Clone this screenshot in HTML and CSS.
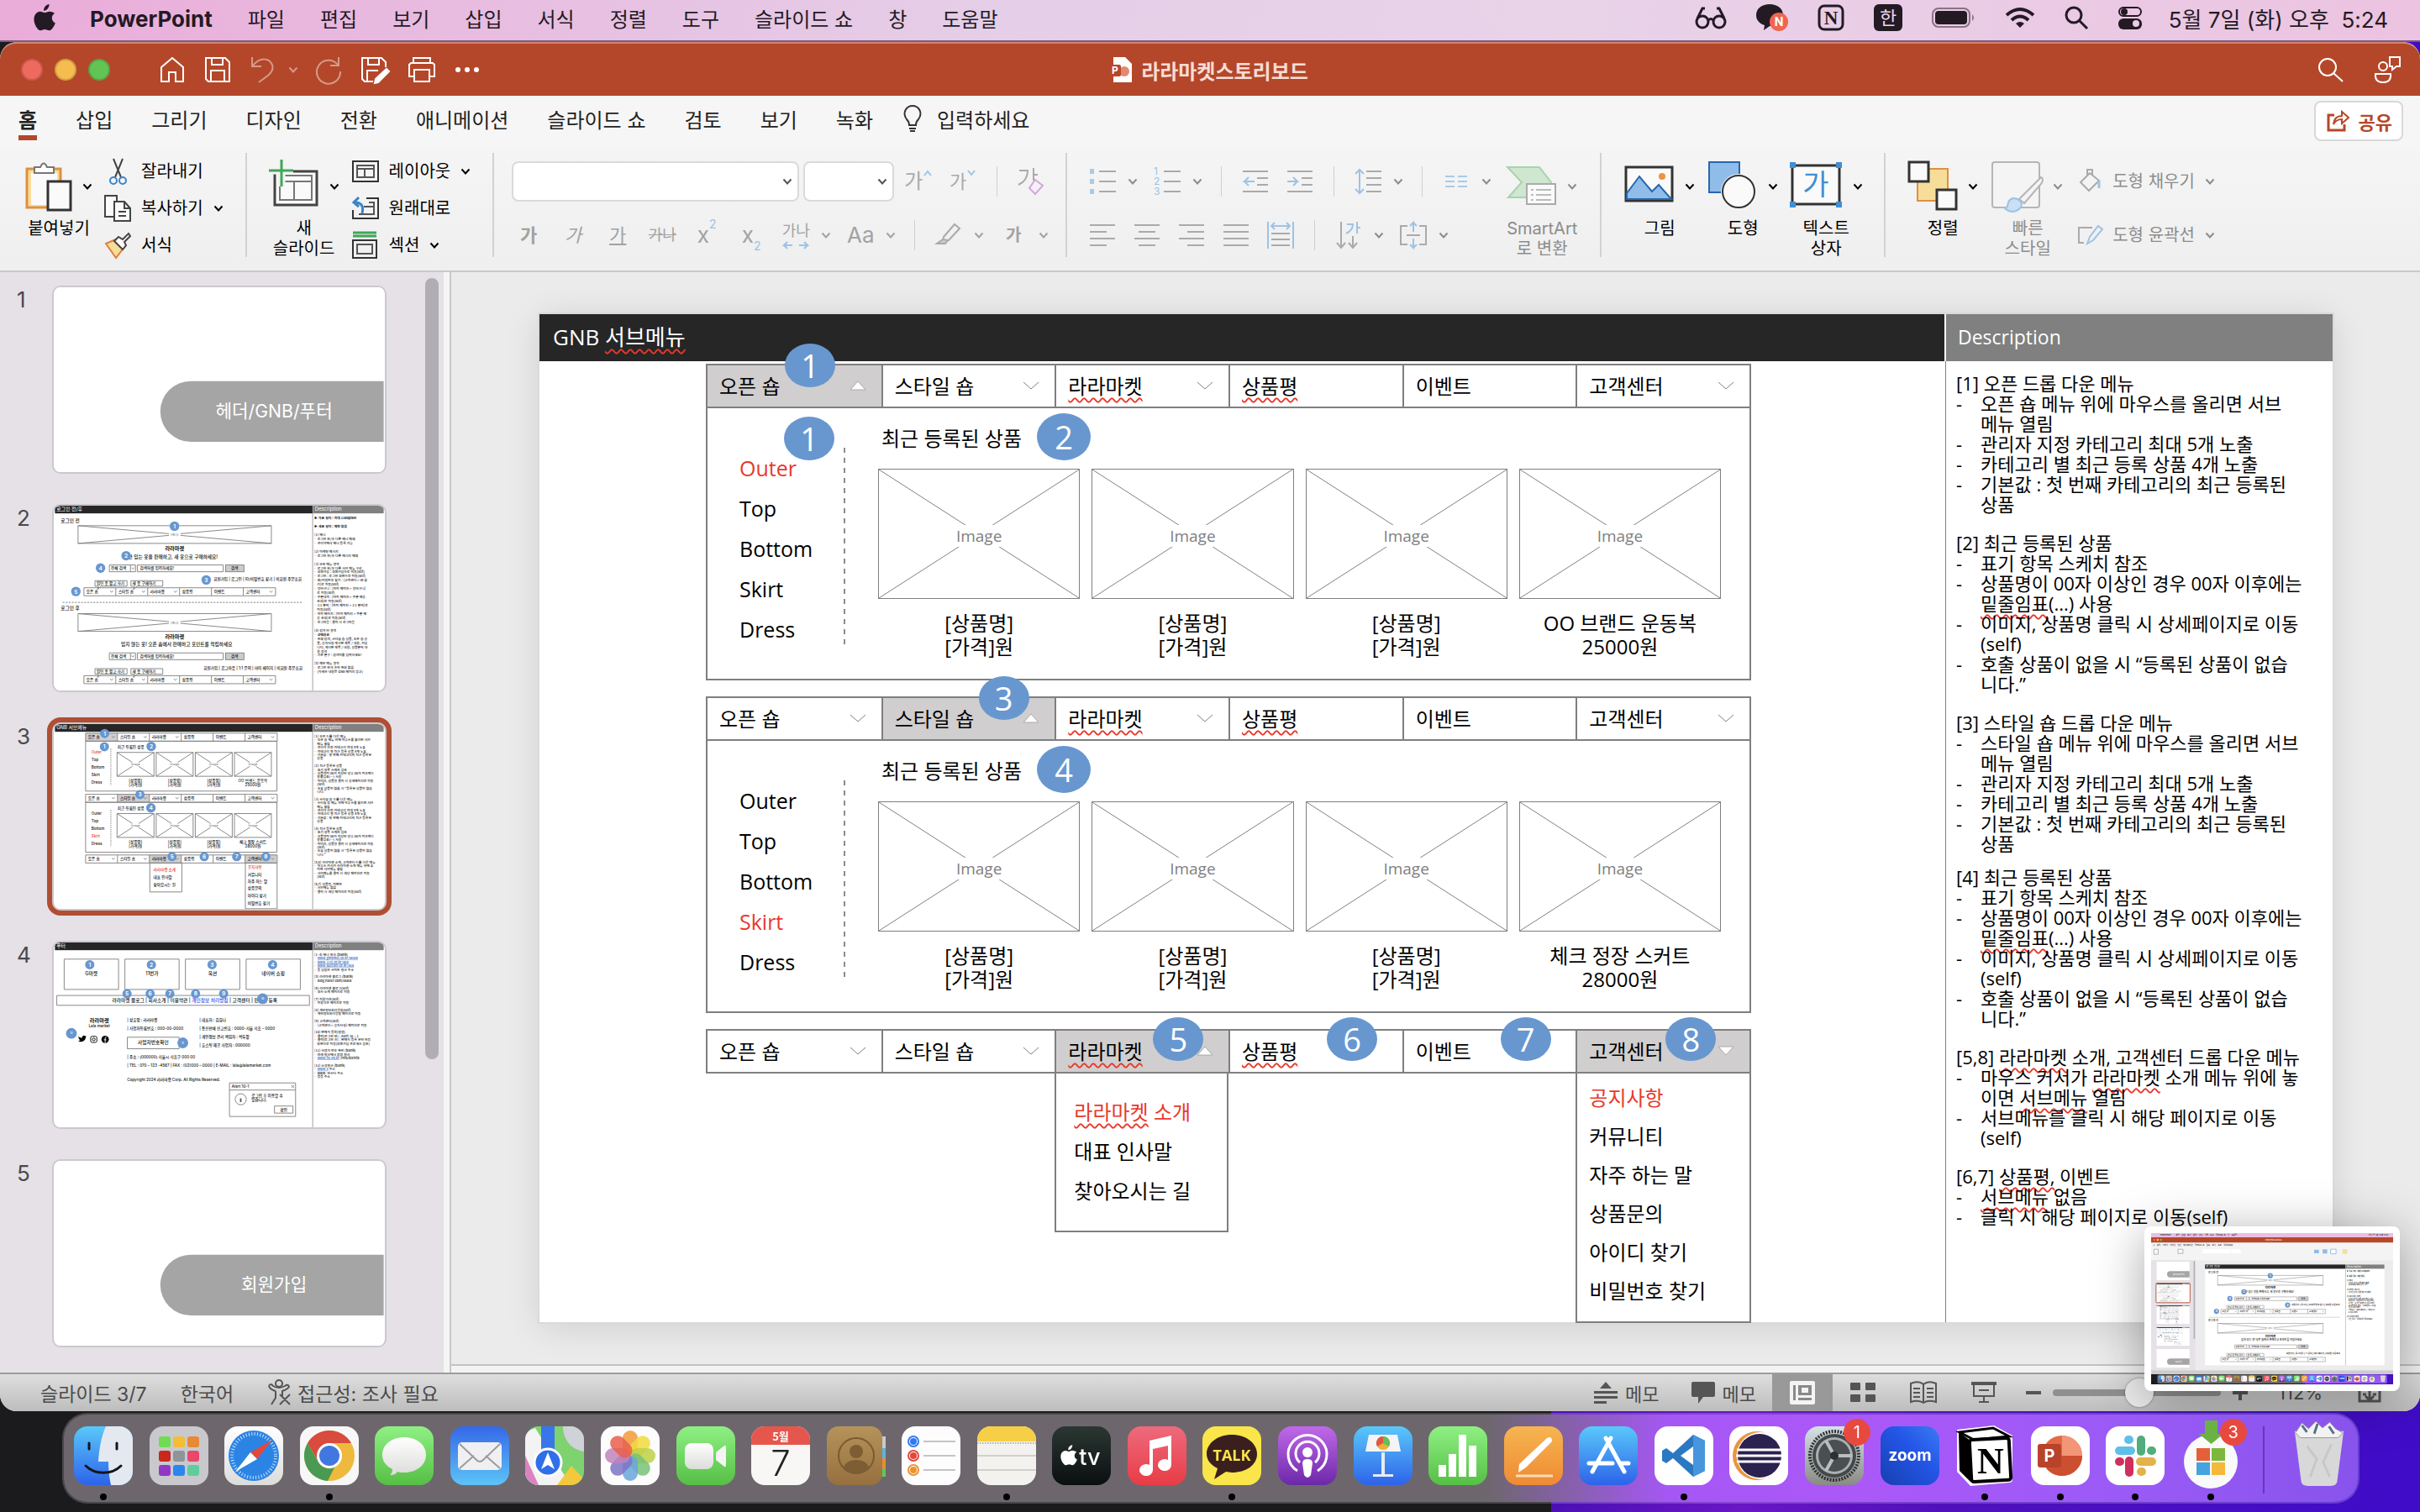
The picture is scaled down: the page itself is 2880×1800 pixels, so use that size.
FILE: index.html
```html
<!DOCTYPE html>
<html lang="ko">
<head>
  <meta charset="UTF-8">
  <title>라라마켓스토리보드</title>
  <link rel="stylesheet" href="styles.css">
</head>
<body>

<!-- shared shapes -->
<svg class="sprite" width="0" height="0" aria-hidden="true">
  <defs>
    <linearGradient id="g-blue" x1="0" y1="0" x2="0" y2="1"><stop offset="0" stop-color="#5ac8fa"/><stop offset="1" stop-color="#2d63ea"/></linearGradient>
    <linearGradient id="g-mail" x1="0" y1="0" x2="0" y2="1"><stop offset="0" stop-color="#3568e8"/><stop offset="1" stop-color="#5cc4f8"/></linearGradient>
    <linearGradient id="g-green" x1="0" y1="0" x2="0" y2="1"><stop offset="0" stop-color="#8ef083"/><stop offset="1" stop-color="#56bf45"/></linearGradient>
    <linearGradient id="g-red" x1="0" y1="0" x2="0" y2="1"><stop offset="0" stop-color="#ee6a7c"/><stop offset="1" stop-color="#e83c46"/></linearGradient>
    <linearGradient id="g-purple" x1="0" y1="0" x2="0" y2="1"><stop offset="0" stop-color="#c069ea"/><stop offset="1" stop-color="#6c28a8"/></linearGradient>
    <linearGradient id="g-orange" x1="0" y1="0" x2="0" y2="1"><stop offset="0" stop-color="#f6b550"/><stop offset="1" stop-color="#ef8a34"/></linearGradient>
    <linearGradient id="g-brown" x1="0" y1="0" x2="0" y2="1"><stop offset="0" stop-color="#b5935a"/><stop offset="1" stop-color="#96703f"/></linearGradient>
    <linearGradient id="g-tv" x1="0" y1="0" x2="0" y2="1"><stop offset="0" stop-color="#2b3733"/><stop offset="1" stop-color="#0a0f10"/></linearGradient>
    <linearGradient id="g-gray" x1="0" y1="0" x2="0" y2="1"><stop offset="0" stop-color="#d5e2e8"/><stop offset="1" stop-color="#8a8a84"/></linearGradient>
    <linearGradient id="g-zoom" x1="1" y1="0" x2="0" y2="1"><stop offset="0" stop-color="#3c7cf2"/><stop offset=".4" stop-color="#2456e8"/><stop offset="1" stop-color="#173fb0"/></linearGradient>
    <linearGradient id="g-white" x1="0" y1="0" x2="0" y2="1"><stop offset="0" stop-color="#fff"/><stop offset="1" stop-color="#dcdcda"/></linearGradient>

    <symbol id="chev" viewBox="0 0 12 10"><path d="M1.500 2.500 6 7.500 10.500 2.500" fill="none" stroke="currentColor" stroke-width="2"/></symbol>
    <symbol id="nav-chev" viewBox="0 0 20 10"><path d="M1 1 10 9 19 1" fill="none" stroke="#7f7f7f"/></symbol>
    <symbol id="apple" viewBox="0 0 26 32"><path fill="currentColor" d="M18.500 0c.2 2.200-.7 4.100-1.900 5.500-1.200 1.400-2.900 2.400-4.600 2.200-.2-2 .8-4 1.900-5.300C15.100 1.100 17 .1 18.500 0zM25 11c-2 1.200-3.200 3-3.200 5.500 0 2.800 1.700 4.900 4 5.900-.5 1.700-1.400 3.300-2.400 4.900-1.300 1.900-2.700 4-4.800 4-2 0-2.700-1.300-5.100-1.300s-3.200 1.200-5.100 1.300c-2 .1-3.600-2-4.900-3.900C.8 23.400-.8 16.800 1.800 12.400c1.300-2.200 3.600-3.700 6.100-3.700 2.200 0 3.900 1.400 5.400 1.400 1.400 0 3.400-1.600 6.100-1.400 2.100.1 4.200.9 5.600 2.300z"/></symbol>

    <symbol id="app-finder" viewBox="0 0 70 70"><rect width="70" height="70" rx="16" fill="url(#g-blue)"/><path d="M38 0h16a16 16 0 0 1 16 16v38a16 16 0 0 1-16 16H44c-2-9-3-18-3-28H29C30 25 33 11 38 0z" fill="#e4e9f1"/><path d="M18 20v7M51 20v7" stroke="#14161c" stroke-width="3" stroke-linecap="round"/><path d="M14 47c11 11 31 11 42 0" fill="none" stroke="#14161c" stroke-width="3" stroke-linecap="round"/></symbol>
    <symbol id="app-launchpad" viewBox="0 0 70 70"><rect width="70" height="70" rx="16" fill="#c9c9cd"/><g><rect x="11" y="12" width="14" height="13" rx="3" fill="#6fdc53"/><rect x="28" y="12" width="14" height="13" rx="3" fill="#f5bd35"/><rect x="45" y="12" width="14" height="13" rx="3" fill="#e68a35"/><rect x="11" y="29" width="14" height="13" rx="3" fill="#c8281e"/><rect x="28" y="29" width="14" height="13" rx="3" fill="#8f9498"/><rect x="45" y="29" width="14" height="13" rx="3" fill="#e9486a"/><rect x="11" y="46" width="14" height="13" rx="3" fill="#9139c4"/><rect x="28" y="46" width="14" height="13" rx="3" fill="#2c86ec"/><rect x="45" y="46" width="14" height="13" rx="3" fill="#60cc9c"/></g></symbol>
    <symbol id="app-safari" viewBox="0 0 70 70"><rect width="70" height="70" rx="16" fill="url(#g-white)"/><circle cx="35" cy="35" r="30" fill="#2b84e4"/><circle cx="35" cy="35" r="26" fill="none" stroke="#cfe4fa" stroke-width="4" stroke-dasharray="1 2.400"/><path d="M57 16 39 39 31 31z" fill="#e3473c"/><path d="M13 54 31 31 39 39z" fill="#fff"/></symbol>
    <symbol id="app-chrome" viewBox="0 0 70 70"><rect width="70" height="70" rx="16" fill="#f7f7f7"/><circle cx="35" cy="35" r="30" fill="#eeb93c"/><path d="M9 20a30 30 0 0 1 52 0H35a15 15 0 0 0-13 22z" fill="#d84b3d"/><path d="M9 20 22 42.500A15 15 0 0 0 41 49L33 65A30 30 0 0 1 9 20z" fill="#4a9a54"/><circle cx="35" cy="35" r="15" fill="#fff"/><circle cx="35" cy="35" r="12" fill="#4277e0"/></symbol>
    <symbol id="app-messages" viewBox="0 0 70 70"><rect width="70" height="70" rx="16" fill="url(#g-green)"/><path d="M35 13c15 0 26 9 26 21S50 55 35 55c-3 0-6 0-8-1-2 3-5 4-9 4 2-2 3-4 3-7C13 47 9 41 9 34c0-12 11-21 26-21z" fill="url(#g-white)"/></symbol>
    <symbol id="app-mail" viewBox="0 0 70 70"><rect width="70" height="70" rx="16" fill="url(#g-mail)"/><rect x="9" y="19" width="52" height="33" rx="5" fill="#f0f0f2"/><path d="m11 21 20 19q4 4 8 0l20-19M11 50l17-15M59 50 42 35" fill="none" stroke="#9a9ca2" stroke-width="2"/></symbol>
    <symbol id="app-maps" viewBox="0 0 70 70"><rect width="70" height="70" rx="16" fill="#7ed370"/><path d="M0 16v38a16 16 0 0 0 16 16h38L12 2Q0 5 0 16z" fill="#f3f3f3"/><path d="M0 35v19a16 16 0 0 0 16 16z" fill="#d983c0"/><path d="M38 70h16a16 16 0 0 0 14-9L55 47z" fill="#f3c83f"/><path d="M45 0c0 16 10 28 25 30V16A16 16 0 0 0 54 0z" fill="#cfd2d6"/><path d="M19 0h16v36H19z" fill="#3976ea"/><circle cx="27" cy="43" r="16" fill="#2f6fe8" stroke="#fff" stroke-width="3"/><path d="m27 31 8 20-8-5-8 5z" fill="#fff"/></symbol>
    <symbol id="app-photos" viewBox="0 0 70 70"><rect width="70" height="70" rx="16" fill="#fcfcfc"/><g fill-opacity=".85"><rect x="26" y="5" width="18" height="30" rx="9" fill="#f29a3a"/><rect x="26" y="5" width="18" height="30" rx="9" fill="#f2d93e" transform="rotate(45 35 35)"/><rect x="26" y="5" width="18" height="30" rx="9" fill="#bcd146" transform="rotate(90 35 35)"/><rect x="26" y="5" width="18" height="30" rx="9" fill="#79c178" transform="rotate(135 35 35)"/><rect x="26" y="5" width="18" height="30" rx="9" fill="#6ba6dc" transform="rotate(180 35 35)"/><rect x="26" y="5" width="18" height="30" rx="9" fill="#7d74c4" transform="rotate(225 35 35)"/><rect x="26" y="5" width="18" height="30" rx="9" fill="#c084bc" transform="rotate(270 35 35)"/><rect x="26" y="5" width="18" height="30" rx="9" fill="#ea5f4c" transform="rotate(315 35 35)"/></g></symbol>
    <symbol id="app-facetime" viewBox="0 0 70 70"><rect width="70" height="70" rx="16" fill="url(#g-green)"/><rect x="10" y="20" width="34" height="31" rx="8" fill="url(#g-white)"/><path d="m47 31 10-8q2-1 2 2v21q0 3-2 2l-10-8z" fill="#f2f5f2"/></symbol>
    <symbol id="app-calendar" viewBox="0 0 70 70"><rect width="70" height="70" rx="16" fill="#f8f7f5"/><path d="M0 22v-6A16 16 0 0 1 16 0h38a16 16 0 0 1 16 16v6z" fill="#e5574d"/><text x="35" y="17" class="cal-month">5월</text><text x="35" y="59" class="cal-day">7</text></symbol>
    <symbol id="app-contacts" viewBox="0 0 70 70"><path d="M60 12h10v14H60z" fill="#c9c9c9"/><path d="M60 26h10v12H60z" fill="#55b5e6"/><path d="M60 38h10v12H60z" fill="#ef8a2e"/><path d="M60 50h10v10H60z" fill="#63c457"/><rect width="66" height="70" rx="14" fill="url(#g-brown)"/><circle cx="35" cy="35" r="21" fill="none" stroke="#7a5a31" stroke-width="2"/><circle cx="35" cy="30" r="8" fill="#7d5d33"/><path d="M20 49c3-12 27-12 30 0q-15 14-30 0z" fill="#7d5d33"/></symbol>
    <symbol id="app-reminders" viewBox="0 0 70 70"><rect width="70" height="70" rx="16" fill="#fdfdfd"/><g fill="#fff" stroke-width="2"><circle cx="14" cy="18" r="6" stroke="#3478f0"/><circle cx="14" cy="35" r="6" stroke="#e0483c"/><circle cx="14" cy="52" r="6" stroke="#ea9232"/></g><circle cx="14" cy="18" r="4" fill="#3478f0"/><circle cx="14" cy="35" r="4" fill="#e0483c"/><circle cx="14" cy="52" r="4" fill="#ea9232"/><path d="M26 18h38M26 35h38M26 52h38" stroke="#c4c4c6" stroke-width="2"/></symbol>
    <symbol id="app-notes" viewBox="0 0 70 70"><rect width="70" height="70" rx="16" fill="#f3f2ee"/><path d="M0 18v-2A16 16 0 0 1 16 0h38a16 16 0 0 1 16 16v2z" fill="#f7cf46"/><path d="M0 20h70" stroke="#b8b6b0" stroke-width="2" stroke-dasharray="1.500 1.500"/><path d="M0 35h70M0 52h70" stroke="#d2d0cc" stroke-width="2"/></symbol>
    <symbol id="app-tv" viewBox="0 0 70 70"><rect width="70" height="70" rx="16" fill="url(#g-tv)"/><use href="#apple" x="10" y="22" width="20" height="25" color="#fff"/><text x="45" y="46" class="tv-label">tv</text></symbol>
    <symbol id="app-music" viewBox="0 0 70 70"><rect width="70" height="70" rx="16" fill="url(#g-red)"/><path d="M26 17 52 11v35a8 7 0 1 1-4-6V23l-18 4v25a8 7 0 1 1-4-6z" fill="#fff"/></symbol>
    <symbol id="app-talk" viewBox="0 0 70 70"><rect width="70" height="70" rx="16" fill="#fae54a"/><path d="M35 10c17 0 30 10 30 23S52 55 35 55l-7-1-14 9 4-13C10 46 5 40 5 33 5 20 18 10 35 10z" fill="#3b1f1e"/><text x="35" y="41" class="talk-label">TALK</text></symbol>
    <symbol id="app-podcasts" viewBox="0 0 70 70"><rect width="70" height="70" rx="16" fill="url(#g-purple)"/><g fill="none" stroke="#fff" stroke-width="3"><path d="M23 53a23 23 0 1 1 24 0"/><path d="M26 43a14 14 0 1 1 18 0"/></g><circle cx="35" cy="31" r="6" fill="#fff"/><path d="M29 44q0-5 6-5t6 5l-2 14q-4 6-8 0z" fill="#fff"/></symbol>
    <symbol id="app-keynote" viewBox="0 0 70 70"><rect width="70" height="70" rx="16" fill="url(#g-blue)"/><path d="M18 10h34l4 20H14z" fill="#f4f4f6"/><circle cx="35" cy="20" r="8" fill="#e7b13a"/><path d="M35 20v-8a8 8 0 0 1 7 12z" fill="#5fbf58"/><path d="M35 20v-8a8 8 0 0 0-7 12z" fill="#e0573f"/><path d="M33 31h4v27h-4zM23 57h24v3H23z" fill="#e8ecf4"/></symbol>
    <symbol id="app-numbers" viewBox="0 0 70 70"><rect width="70" height="70" rx="16" fill="url(#g-green)"/><path d="M12 46h9v14h-9zM24 33h9v27h-9zM36 10h9v50h-9zM48 23h9v37h-9z" fill="#fff"/></symbol>
    <symbol id="app-pages" viewBox="0 0 70 70"><rect width="70" height="70" rx="16" fill="url(#g-orange)"/><path d="m17 55 1-10 33-31q6-3 6 4L26 49z" fill="#fff"/><path d="M14 59h44" stroke="#fbdcb8" stroke-width="3"/></symbol>
    <symbol id="app-appstore" viewBox="0 0 70 70"><rect width="70" height="70" rx="16" fill="url(#g-blue)"/><path d="m38 14-22 40M32 14l22 40M12 44h28M49 44h10" stroke="#fff" stroke-width="5" stroke-linecap="round"/></symbol>
    <symbol id="app-vscode" viewBox="0 0 70 70"><rect width="70" height="70" rx="16" fill="#fff"/><path d="m46 10 14 7v36l-14 7-24-22-8 6-5-3v-12l5-3 8 6zM46 24 31 35l15 11z" fill="#2b78c2" fill-rule="evenodd"/><path d="m46 10 14 7v36l-14 7z" fill="#4796dd"/></symbol>
    <symbol id="app-eclipse" viewBox="0 0 70 70"><rect width="70" height="70" rx="16" fill="#fff"/><circle cx="33" cy="35" r="29" fill="#e99440"/><circle cx="37" cy="35" r="28" fill="#fff"/><circle cx="36" cy="35" r="26" fill="#2b2250"/><path d="M9 28h53M8 35h55M9 42h53" stroke="#fff" stroke-width="3"/></symbol>
    <symbol id="app-settings" viewBox="0 0 70 70"><rect width="70" height="70" rx="16" fill="url(#g-gray)"/><circle cx="35" cy="35" r="29" fill="none" stroke="#2e3133" stroke-width="4" stroke-dasharray="2 1.500"/><circle cx="35" cy="35" r="26" fill="#44484a"/><circle cx="35" cy="35" r="22" fill="#a9b0b2"/><circle cx="35" cy="35" r="19" fill="#4b4f51"/><path d="M35 35H56M35 35 25 17M35 35 25 53" stroke="#b9bfc1" stroke-width="4"/><circle cx="35" cy="35" r="5" fill="#2e3133"/></symbol>
    <symbol id="app-zoom" viewBox="0 0 70 70"><rect width="70" height="70" rx="16" fill="url(#g-zoom)"/><text x="35" y="41" class="zoom-label">zoom</text></symbol>
    <symbol id="app-notion" viewBox="0 0 70 70"><path d="M2 4 46-1l22 12v52q0 4-4 4l-46 4L2 54z" fill="#fff"/><path d="M5 7 45 2l19 10-42 4z" fill="#fff" stroke="#000" stroke-width="3"/><path d="m4 7 14 10v49L5 53z" fill="#000"/><rect x="18" y="15" width="47" height="50" rx="3" fill="#fff" stroke="#000" stroke-width="4" transform="rotate(-3 41 40)"/><text x="42" y="56" class="notion-label">N</text></symbol>
    <symbol id="app-ppt" viewBox="0 0 70 70"><rect width="70" height="70" rx="16" fill="#fff"/><circle cx="37" cy="35" r="24" fill="#e36c46"/><path d="M37 11a24 24 0 0 1 24 24H37z" fill="#f29677"/><path d="M13 35h48a24 24 0 0 1-48 0z" fill="#cc4f2f"/><rect x="8" y="21" width="28" height="28" rx="3" fill="#b8432a"/><text x="22" y="42" class="p-label">P</text></symbol>
    <symbol id="app-slack" viewBox="0 0 70 70"><rect width="70" height="70" rx="16" fill="#fff"/><g><rect x="11" y="24" width="24" height="10" rx="5" fill="#5fbfe8"/><rect x="22" y="11" width="11" height="10" rx="5" fill="#5fbfe8"/><rect x="37" y="11" width="10" height="24" rx="5" fill="#4fae7c"/><rect x="49" y="24" width="11" height="10" rx="5" fill="#4fae7c"/><rect x="36" y="37" width="24" height="10" rx="5" fill="#e2b34a"/><rect x="37" y="49" width="11" height="10" rx="5" fill="#e2b34a"/><rect x="23" y="36" width="10" height="24" rx="5" fill="#cf2f5c"/><rect x="11" y="37" width="11" height="10" rx="5" fill="#cf2f5c"/></g></symbol>
    <symbol id="app-updater" viewBox="0 0 70 70"><circle cx="35" cy="42" r="32" fill="#fafafa"/><path d="M18 26h16v15H18z" fill="#e3603a"/><path d="M36 26h16v15H36z" fill="#7cb83e"/><path d="M18 43h16v15H18z" fill="#45a3e0"/><path d="M36 43h16v15H36z" fill="#f4b83c"/><path d="M28-7h15v16h7L35.500 21 21 9h7z" fill="#6bb245"/></symbol>
    <symbol id="app-trash" viewBox="0 0 70 80"><path d="M5 12h60l-8 62q-1 5-8 5H21q-7 0-8-5z" fill="#d8d8d8"/><path d="m20 30 12 16-8 22M50 28 40 50l8 18" fill="none" stroke="#c8c8c8" stroke-width="3"/><path d="m6 14 8-12 8 7 9-9 8 8 9-7 7 8 9 5-6 6H12z" fill="#f3f3f3" stroke="#999"/><path d="m14 5 6 8M33 3l-4 12M47 6l6 9" stroke="#5a6f86" stroke-width="3"/></symbol>

    <!-- wireframe pieces shared by the thumbnails (slide is 2134 x 1200) -->
    <g id="w-nav" class="wire">
      <path d="M0 0h1244v52H0zM207 0v52M414 0v52M621 0v52M828 0v52M1035 0v52"/>
      <path d="m170 20 10 9 10-9M377 20l10 9 10-9M584 20l10 9 10-9M1205 20l10 9 10-9"/>
      <g class="ink"><text x="16" y="35">오픈 숍</text><text x="224" y="35">스타일 숍</text><text x="431" y="35">라라마켓</text><text x="638" y="35">상품평</text><text x="845" y="35">이벤트</text><text x="1051" y="35">고객센터</text></g>
    </g>
    <g id="w-img" class="wire"><path d="M0 0h240v155H0zM0 0l100 65M240 0 140 65M0 155l100-65M240 155 140 90"/><text x="120" y="84" class="mid soft">Image</text></g>
    <g id="w-head"><rect width="1672" height="50" fill="#262626"/><rect x="1674" width="460" height="50" fill="#808080"/><path d="M1673 50v1150" stroke="#7f7f7f" stroke-width="4"/><text x="1688" y="34" class="head-text">Description</text></g>
    <g id="w-login">
      <g class="wire"><path d="M150 130h1255v115H150zM150 130l590 52M1405 130l-590 52M150 245l590-52M1405 245l-590-52"/><path d="M353 385h170v44H353zM490 385v44M535 385h557v44H535zM497 403l9 8 9-8"/><rect x="1108" y="385" width="119" height="44" fill="#ccc"/><path d="M260 487h208v36H300l-24 22 8-22h-24zM493 487h207v36H533l-24 22 8-22h-24z"/></g>
      <g class="ink"><text x="777" y="196" class="mid soft">(배너)</text><text x="777" y="290" class="mid strong">라라마켓</text><text x="364" y="415">전체 검색</text><text x="552" y="415">검색어를 입력하세요!</text><text x="1167" y="415" class="mid">검색</text><text x="270" y="514">입던 옷 팔고 사기</text><text x="503" y="514">새 옷 구매하기</text></g>
      <use href="#w-nav" x="188" y="533"/>
    </g>
    <g id="slide-2">
      <rect width="2134" height="1200" fill="#fff"/>
      <use href="#w-head"/><text x="10" y="34" class="head-text">로그인 전/후</text>
      <use href="#w-login"/><use href="#w-login" y="571"/>
      <path d="M50 628h1560" stroke="#555" stroke-width="4" stroke-dasharray="12 8"/>
      <g class="ink big-ink"><text x="38" y="108">로그인 전</text><text x="38" y="679">로그인 후</text><text x="766" y="341" class="mid">안 입는 옷을 판매하고, 새 옷으로 구매하세요!</text><text x="790" y="911" class="mid">입지 않는 옷! 오픈 숍에서 판매하고 포인트를 적립하세요</text></g>
      <g class="ink"><text x="1030" y="487">회원가입 | 로그인 | ID/비밀번호 찾기 | 비회원 주문조회</text><text x="965" y="1063">회원가입 | 로그아웃 | 1:1 문의 | 마이 페이지 | 비회원 주문조회</text></g>
      <g class="dots"><circle cx="776" cy="133" r="31"/><circle cx="462" cy="325" r="31"/><circle cx="982" cy="482" r="31"/><circle cx="296" cy="405" r="31"/><circle cx="136" cy="557" r="31"/></g>
      <g class="dot-text"><text x="776" y="146">1</text><text x="462" y="338">2</text><text x="982" y="495">3</text><text x="296" y="418">4</text><text x="136" y="570">5</text></g>
    </g>
    <g id="w-panel" class="wire">
      <path d="M0 0h1242v324H0z"/><path d="M164 48v240" stroke-dasharray="8 6"/>
      <use href="#w-img" x="204" y="73"/><use href="#w-img" x="458" y="73"/><use href="#w-img" x="712" y="73"/><use href="#w-img" x="966" y="73"/>
      <g class="ink"><text x="207" y="46">최근 등록된 상품</text><text x="38" y="130">Top</text><text x="38" y="178">Bottom</text><text x="38" y="275">Dress</text><text x="324" y="266" class="mid">[상품명]</text><text x="324" y="294" class="mid">[가격]원</text><text x="578" y="266" class="mid">[상품명]</text><text x="578" y="294" class="mid">[가격]원</text><text x="832" y="266" class="mid">[상품명]</text><text x="832" y="294" class="mid">[가격]원</text></g>
    </g>
    <g id="slide-3">
      <rect width="2134" height="1200" fill="#fff"/>
      <use href="#w-head"/><text x="10" y="34" class="head-text">GNB 서브메뉴</text>
      <path d="M199 59h207v52H199zM406 456h207v52H406zM613 850h207v52H613zM1234 850h207v52h-207z" fill="#d0cece"/>
      <use href="#w-nav" x="199" y="59"/><use href="#w-panel" x="199" y="111"/>
      <use href="#w-nav" x="199" y="456"/><use href="#w-panel" x="199" y="508"/>
      <use href="#w-nav" x="199" y="850"/>
      <path class="wire" d="M616 902h208v188H616zM1236 902h206v297h-206z"/>
      <g class="ink"><text x="237" y="193" class="hot">Outer</text><text x="237" y="338">Skirt</text><text x="237" y="590">Outer</text><text x="237" y="735" class="hot">Skirt</text><text x="1285" y="377" class="mid">OO 브랜드 운동복</text><text x="1285" y="405" class="mid">25000원</text><text x="1285" y="774" class="mid">체크 정장 스커트</text><text x="1285" y="802" class="mid">28000원</text><text x="639" y="957" class="hot">라라마켓 소개</text><text x="639" y="1005">대표 인사말</text><text x="639" y="1051">찾아오시는 길</text><text x="1251" y="940" class="hot">공지사항</text><text x="1251" y="989">커뮤니티</text><text x="1251" y="1032">자주 하는 말</text><text x="1251" y="1077">상품문의</text><text x="1251" y="1125">아이디 찾기</text><text x="1251" y="1174">비밀번호 찾기</text></g>
      <g class="dots"><circle cx="323" cy="61" r="30"/><circle cx="321" cy="147" r="30"/><circle cx="625" cy="145" r="31"/><circle cx="552" cy="458" r="30"/><circle cx="623" cy="544" r="31"/><circle cx="760" cy="861" r="30"/><circle cx="969" cy="861" r="30"/><circle cx="1180" cy="861" r="30"/><circle cx="1369" cy="861" r="30"/></g>
      <g class="dot-text"><text x="323" y="74">1</text><text x="321" y="160">1</text><text x="625" y="158">2</text><text x="552" y="471">3</text><text x="623" y="557">4</text><text x="760" y="874">5</text><text x="969" y="874">6</text><text x="1180" y="874">7</text><text x="1369" y="874">8</text></g>
    </g>
    <g id="slide-4">
      <rect width="2134" height="1200" fill="#fff"/>
      <use href="#w-head"/><text x="10" y="34" class="head-text">푸터</text>
      <path class="wire" d="M60 108h353v197H60zM454 108h352v197H454zM847 108h353v197H847zM1241 108h352v197h-352zM12 344h1640v64H12zM470 615h336v75H470zM1133 912h429v218h-429zM1133 958h429M1425 1062h120v46h-120zM1535 926l18 18M1553 926l-18 18"/>
      <circle class="wire" cx="1206" cy="1018" r="36"/><path d="M1206 1012v24" stroke="#555" stroke-width="10"/>
      <g class="ink big-ink"><text x="236" y="214" class="mid">G마켓</text><text x="630" y="214" class="mid">11번가</text><text x="1023" y="214" class="mid">옥션</text><text x="1417" y="214" class="mid">네이버 쇼핑</text><text x="372" y="387">라라마켓 블로그 | 회사소개 | 이용약관 | <tspan fill="#3a46e0">개인정보 처리방침</tspan> | 고객센터 | 판매자 등록</text><text x="638" y="662" class="mid">사업자번호확인</text></g>
      <g class="ink"><text x="288" y="517" class="mid strong">라라마켓</text><text x="288" y="552" class="mid">Lala market</text><text x="468" y="514">| 상호명 : 라라마켓</text><text x="468" y="569">| 사업자등록번호 : 000-00-0000</text><text x="468" y="750">| 주소 : (000000) 서울시 서초구 000 00</text><text x="468" y="807">| TEL : 070 – 123 -4567 | FAX : (02)000 – 0000 | E-MAIL : lala@lalamarket.com</text><text x="468" y="902">Copyright 2024 라라마켓 Corp. All Rights Reserved.</text><text x="937" y="514">| 대표자 : 김유나</text><text x="937" y="569">| 통신판매 신고번호 : 0000-서울 서초 – 0000</text><text x="937" y="622">| 개인정보 관리 책임자 : 박두팔</text><text x="937" y="677">| 호스팅 제공 사업자 : 000000</text><text x="1148" y="945">Alert 10-1</text><text x="1276" y="1003">로그인 후 이용할 수</text><text x="1276" y="1030">있습니다.</text><text x="1485" y="1095" class="mid">확인</text></g>
      <path d="M152 610q12 12 24 8c0-14 14-18 20-10l8-2-4 8c0 24-28 40-50 24 8 0 12-2 14-4-10-2-12-24-12-24z"/><rect x="232" y="609" width="40" height="40" rx="10" fill="none" stroke="#000" stroke-width="5"/><circle cx="252" cy="629" r="9" fill="none" stroke="#000" stroke-width="5"/><circle cx="326" cy="629" r="24"/><path d="M326 653v-32q0-7 9-6M317 632h17" stroke="#fff" stroke-width="5" fill="none"/>
      <g class="dots"><circle cx="226" cy="144" r="30"/><circle cx="626" cy="144" r="30"/><circle cx="1020" cy="144" r="30"/><circle cx="1413" cy="144" r="30"/><circle cx="468" cy="333" r="30"/><circle cx="618" cy="333" r="30"/><circle cx="746" cy="333" r="30"/><circle cx="913" cy="333" r="30"/><circle cx="1095" cy="333" r="30"/><circle cx="1348" cy="365" r="35"/><circle cx="107" cy="590" r="35"/><circle cx="830" cy="652" r="35"/></g>
      <g class="dot-text"><text x="226" y="157">1</text><text x="626" y="157">2</text><text x="1020" y="157">3</text><text x="1413" y="157">4</text><text x="468" y="346">5</text><text x="618" y="346">6</text><text x="746" y="346">7</text><text x="913" y="346">8</text><text x="1095" y="346">9</text></g>
      <g class="dot-text tiny"><text x="1348" y="371">10</text><text x="107" y="596">12</text><text x="830" y="658">11</text></g>
    </g>
    <g id="slide-1"><rect width="2134" height="1200" fill="#fff"/><path d="M2134 609H881a197 197 0 0 0 0 394h1253z" fill="#a5a5a5"/><text x="1422" y="846" class="cover-text">헤더/GNB/푸터</text></g>
    <g id="slide-5"><rect width="2134" height="1200" fill="#fff"/><path d="M2134 609H881a197 197 0 0 0 0 394h1253z" fill="#a5a5a5"/><text x="1422" y="846" class="cover-text">회원가입</text></g>
  </defs>
</svg>

<header class="menubar">
  <svg class="apple" width="26" height="32"><use href="#apple"/></svg>
  <nav class="menus">
    <strong>PowerPoint</strong><a href="#">파일</a><a href="#">편집</a><a href="#">보기</a><a href="#">삽입</a><a href="#">서식</a><a href="#">정렬</a><a href="#">도구</a><a href="#">슬라이드 쇼</a><a href="#">창</a><a href="#">도움말</a>
  </nav>
  <div class="status-icons">
    <svg width="38" height="28" viewBox="0 0 38 28" fill="none" stroke="currentColor" stroke-width="3"><circle cx="9" cy="19" r="7"/><circle cx="29" cy="19" r="7"/><path d="M16 17q3-3 6 0M3 15 9 3h3M35 15 29 3h-3"/></svg>
    <svg width="38" height="32" viewBox="0 0 38 32"><path d="M16 0c9 0 16 5 16 13s-7 13-16 13l-7 5 1-6C4 23 0 19 0 13 0 5 7 0 16 0z" fill="currentColor"/><circle cx="27" cy="21" r="11" fill="#f0654f"/><text x="27" y="26" class="tiny-n">N</text></svg>
    <svg width="32" height="32" viewBox="0 0 32 32"><rect x="2" y="2" width="28" height="28" rx="6" fill="none" stroke="currentColor" stroke-width="3"/><text x="16" y="24" class="serif-n">N</text></svg>
    <svg width="34" height="32" viewBox="0 0 34 32"><rect width="34" height="32" rx="6" fill="currentColor"/><text x="17" y="24" class="han">한</text></svg>
    <svg width="52" height="26" viewBox="0 0 52 26"><rect x="1" y="2" width="44" height="22" rx="7" fill="none" stroke="currentColor" stroke-opacity=".5" stroke-width="2"/><rect x="4" y="5" width="38" height="16" rx="4" fill="currentColor"/><path d="M48 9q4 4 0 8z" fill="currentColor" opacity=".5"/></svg>
    <svg width="36" height="26" viewBox="0 0 36 26" fill="none" stroke="currentColor" stroke-width="4"><path d="M2 10q16-14 32 0M8 16q10-9 20 0"/><path d="m13 20 5 5 5-5q-5-4-10 0z" fill="currentColor" stroke="none"/></svg>
    <svg width="28" height="28" viewBox="0 0 28 28" fill="none" stroke="currentColor" stroke-width="3"><circle cx="11" cy="11" r="9"/><path d="m18 18 9 9"/></svg>
    <svg width="30" height="28" viewBox="0 0 30 28"><rect x="2" y="2" width="26" height="10" rx="5" fill="none" stroke="currentColor" stroke-width="2"/><circle cx="8" cy="7" r="4" fill="currentColor"/><rect x="1" y="15" width="28" height="13" rx="6" fill="currentColor"/><circle cx="22" cy="21" r="4" fill="#eccbe4"/></svg>
  </div>
  <time class="clock">5월 7일 (화) 오후&nbsp; 5:24</time>
</header>

<main class="window">
  <div class="titlebar">
    <div class="lights"><i class="close"></i><i class="mini"></i><i class="full"></i></div>
    <div class="quick">
      <svg width="32" height="32" viewBox="0 0 32 32"><path d="M3 13 16 2l13 11v17h-9V19h-8v11H3z"/></svg>
      <svg width="32" height="32" viewBox="0 0 32 32"><path d="M2 2h23l5 5v23H5l-3-3zM9 2v8h13V2M8 30V17h16v13"/></svg>
      <svg class="dim" width="32" height="32" viewBox="0 0 32 32"><path d="M3 1v11h11M4 11Q13 0 23 5q9 8 0 17L11 31"/></svg>
      <svg class="dim small" width="12" height="10"><use href="#chev"/></svg>
      <svg class="dim" width="34" height="32" viewBox="0 0 34 32"><path d="M30 1v10H20M29 10A14 14 0 1 0 32 18"/></svg>
      <svg width="34" height="32" viewBox="0 0 34 32"><path d="M15 30H5l-3-3V2h23l5 5v6M9 2v8h13V2M8 30V17h13"/><path d="m31 15 3 3-13 13-4 1 1-5z" fill="#fff"/></svg>
      <svg width="34" height="32" viewBox="0 0 34 32"><path d="M7 8V2h20v6M7 24H2V10l2-2h26l2 2v14h-5M8 16h18v14H8z"/></svg>
      <svg width="30" height="32" viewBox="0 0 30 32"><g fill="#fff" stroke="none"><circle cx="4" cy="16" r="3"/><circle cx="15" cy="16" r="3"/><circle cx="26" cy="16" r="3"/></g></svg>
    </div>
    <div class="doc-title">
      <svg width="28" height="30" viewBox="0 0 28 30"><path d="M5 0h14l8 8v22H5z" fill="#fff"/><circle cx="18" cy="17" r="6" fill="#e08a70"/><rect y="9" width="14" height="14" rx="2" fill="#b7472a"/><text x="7" y="20" class="doc-p">P</text></svg>
      라라마켓스토리보드
    </div>
    <div class="title-right">
      <svg width="32" height="30" viewBox="0 0 32 30"><circle cx="12" cy="12" r="10"/><path d="m19 19 11 10"/></svg>
      <svg width="34" height="34" viewBox="0 0 34 34"><circle cx="12" cy="13" r="5"/><path d="M3 22h18q1 10-9 10T3 22zM20 2h12v11h-4l-5 4v-4h-3z"/></svg>
    </div>
  </div>

  <nav class="tabs">
    <a href="#" class="tab current">홈</a><a href="#" class="tab">삽입</a><a href="#" class="tab">그리기</a><a href="#" class="tab">디자인</a><a href="#" class="tab">전환</a><a href="#" class="tab">애니메이션</a><a href="#" class="tab">슬라이드 쇼</a><a href="#" class="tab">검토</a><a href="#" class="tab">보기</a><a href="#" class="tab">녹화</a>
    <a href="#" class="tab tell"><svg width="22" height="32" viewBox="0 0 22 32" fill="none" stroke="#333" stroke-width="2"><path d="M7 24q0-4-3-7C-2 9 4 1 11 1s13 8 7 16q-3 3-3 7zM7 28h8M8 31h6"/></svg>입력하세요</a>
    <button class="share"><svg width="28" height="26" viewBox="0 0 28 26" fill="none" stroke="#b7472a" stroke-width="3"><path d="M9 6H2v18h19v-7"/><path d="M8 17q1-10 10-10V2l8 7-8 7v-5q-7 0-10 6z" stroke-width="2"/></svg>공유</button>
  </nav>

  <section class="ribbon">
    <div class="group clipboard">
      <button class="big"><span class="icon"><svg width="56" height="60" viewBox="0 0 56 60"><path d="M2 9h40v46H2z" fill="#f7dd9a" stroke="#e0903f" stroke-width="3"/><path d="M7 14h31v38H7z" fill="#fafafa"/><path d="M11 14V7h7q4-9 8 0h8v7z" fill="#fff" stroke="#777" stroke-width="2"/><path d="M27 24h27v34H27z" fill="#fafafa" stroke="#333" stroke-width="3"/></svg><svg width="12" height="10"><use href="#chev"/></svg></span>붙여넣기</button>
      <div class="stack">
        <button class="line"><svg width="32" height="32" viewBox="0 0 32 32" fill="none" stroke-width="2"><path d="m11 1 9 22M22 1l-9 22" stroke="#444"/><circle cx="11" cy="27" r="4" stroke="#3a84c8"/><circle cx="22" cy="27" r="4" stroke="#3a84c8"/></svg>잘라내기</button>
        <button class="line"><svg width="32" height="32" viewBox="0 0 32 32" fill="#fafafa" stroke="#444" stroke-width="2"><path d="M1 1h14v25H1z"/><path d="M12 8h12l7 8v15H12zM24 8v8h7M17 20h9M17 25h9"/></svg>복사하기<svg width="12" height="10"><use href="#chev"/></svg></button>
        <button class="line"><svg width="32" height="32" viewBox="0 0 32 32" stroke-width="2"><path d="m2 14 14-6 8 10-10 13z" fill="#f7dd9a" stroke="#e0803a"/><path d="m12 11 5-5 5 3 7-7 2 3-7 7 2 4-4 5z" fill="#fff" stroke="#444"/></svg>서식</button>
      </div>
    </div>

    <div class="group">
      <button class="big"><span class="icon"><svg width="60" height="60" viewBox="0 0 60 60" fill="none"><path d="M7 12h50v40H7z" fill="#fafafa" stroke="#444" stroke-width="3"/><path d="M13 17h38v29H13zM13 24h38M30 24v22" stroke="#777" stroke-width="2"/><path d="M0 11h29M15-2v32" stroke="#f3f3f3" stroke-width="9"/><path d="M0 11h29M15-2v32" stroke="#3fa757" stroke-width="3"/></svg><svg width="12" height="10"><use href="#chev"/></svg></span>새<br>슬라이드</button>
      <div class="stack">
        <button class="line"><svg width="32" height="28" viewBox="0 0 32 28" fill="none" stroke="#555" stroke-width="2"><path d="M1 2h30v24H1z" stroke="#333"/><path d="M6 7h20v14H6zM6 11h20M15 11v10"/></svg>레이아웃<svg width="12" height="10"><use href="#chev"/></svg></button>
        <button class="line"><svg width="32" height="28" viewBox="0 0 32 28" fill="none" stroke="#555" stroke-width="2"><path d="M17 2h14v24H1V16" stroke="#333"/><path d="M20 7h6v14H8M14 12h12"/><path d="M8 1 2 7l6 5M2 7q13-1 10 13" stroke="#3a84c8" stroke-width="3"/></svg>원래대로</button>
        <button class="line"><svg width="32" height="34" viewBox="0 0 32 34" fill="none" stroke="#555" stroke-width="2"><path d="M1 2h28M1 6h28" stroke="#3fa757" stroke-width="3"/><path d="M1 11h28v21H1z" stroke="#333"/><path d="M6 16h18v11H6z"/></svg>섹션<svg width="12" height="10"><use href="#chev"/></svg></button>
      </div>
    </div>

    <div class="group font-group">
      <div class="rows">
        <div class="row">
          <label class="pick wide"><select aria-label="글꼴"><option></option></select><svg width="12" height="10"><use href="#chev"/></svg></label>
          <label class="pick"><select aria-label="글꼴 크기"><option></option></select><svg width="12" height="10"><use href="#chev"/></svg></label>
          <button class="tool off grow">가<svg width="12" height="10" viewBox="0 0 12 10"><path d="m2 8 4-5 4 5" fill="none" stroke="#9cc3e6" stroke-width="2"/></svg></button>
          <button class="tool off shrink">가<svg width="12" height="10" viewBox="0 0 12 10"><path d="m2 2 4 5 4-5" fill="none" stroke="#9cc3e6" stroke-width="2"/></svg></button>
          <i class="sep"></i>
          <button class="tool off"><svg width="34" height="34" viewBox="0 0 34 34" fill="none" stroke="#aaa" stroke-width="2"><path d="M3 4h10q0 12-11 17M20 1v15M20 9h5"/><path d="m22 15 9 7-9 10-7-7z" stroke="#cfaad6" fill="#f7eff9"/></svg></button>
        </div>
        <div class="row off">
          <button class="tool"><b>가</b></button><button class="tool"><em>가</em></button><button class="tool"><u>가</u></button><button class="tool strike"><s>가나</s></button><button class="tool latin">x<sup>2</sup></button><button class="tool latin">x<sub>2</sub></button>
          <button class="split"><span class="pair">가나<svg width="32" height="10" viewBox="0 0 32 10" fill="none" stroke="#9cc3e6" stroke-width="2"><path d="M12 5H2l4-4M2 5l4 4M20 5h10l-4-4M30 5l-4 4"/></svg></span><svg width="12" height="10"><use href="#chev"/></svg></button>
          <button class="split latin"><span>Aa</span><svg width="12" height="10"><use href="#chev"/></svg></button>
          <i class="sep"></i>
          <button class="split"><span><svg width="30" height="28" viewBox="0 0 30 28" fill="none" stroke="#aaa" stroke-width="2"><path d="M9 16 22 1l6 5-13 14-7 1z"/><path d="m8 19-7 5h10l3-4z" fill="#ccc"/></svg></span><svg width="12" height="10"><use href="#chev"/></svg></button>
          <button class="split"><span><b>가</b></span><svg width="12" height="10"><use href="#chev"/></svg></button>
        </div>
      </div>
    </div>

    <div class="group para-group">
      <div class="rows off">
        <div class="row">
          <button class="split"><span><svg width="32" height="32" viewBox="0 0 32 32" stroke-width="2"><path d="M12 4h20M12 16h20M12 28h20" stroke="#aaa"/><path d="M1 1h5v6H1zM1 13h5v6H1zM1 25h5v6H1z" fill="#a9cbe8"/></svg></span><svg width="12" height="10"><use href="#chev"/></svg></button>
          <button class="split"><span><svg width="32" height="34" viewBox="0 0 32 34" stroke-width="2"><path d="M12 5h20M12 17h20M12 29h20" stroke="#aaa"/><text x="0" y="9" class="num">1</text><text x="0" y="21" class="num">2</text><text x="0" y="33" class="num">3</text></svg></span><svg width="12" height="10"><use href="#chev"/></svg></button>
          <i class="sep"></i>
          <button class="tool"><svg width="30" height="28" viewBox="0 0 30 28" fill="none" stroke="#aaa" stroke-width="2"><path d="M0 2h30M17 10h13M17 18h13M0 26h30"/><path d="M14 14H2l5-5M2 14l5 5" stroke="#9cc3e6"/></svg></button>
          <button class="tool"><svg width="30" height="28" viewBox="0 0 30 28" fill="none" stroke="#aaa" stroke-width="2"><path d="M0 2h30M17 10h13M17 18h13M0 26h30"/><path d="M0 14h12L7 9M12 14l-5 5" stroke="#9cc3e6"/></svg></button>
          <i class="sep"></i>
          <button class="split"><span><svg width="32" height="30" viewBox="0 0 32 30" fill="none" stroke="#aaa" stroke-width="2"><path d="M14 3h18M14 11h18M14 19h18M14 27h18"/><path d="M6 1v28M1 6l5-5 5 5M1 24l5 5 5-5" stroke="#9cc3e6"/></svg></span><svg width="12" height="10"><use href="#chev"/></svg></button>
          <i class="sep"></i>
          <button class="split"><span><svg width="26" height="16" viewBox="0 0 26 16" stroke="#a9cbe8" stroke-width="2"><path d="M0 2h11M0 8h11M0 14h11M15 2h11M15 8h11M15 14h11"/></svg></span><svg width="12" height="10"><use href="#chev"/></svg></button>
        </div>
        <div class="row">
          <button class="tool"><svg width="30" height="28" viewBox="0 0 30 28" stroke="#aaa" stroke-width="2"><path d="M0 2h30M0 10h20M0 18h30M0 26h20"/></svg></button>
          <button class="tool"><svg width="30" height="28" viewBox="0 0 30 28" stroke="#aaa" stroke-width="2"><path d="M0 2h30M5 10h20M0 18h30M5 26h20"/></svg></button>
          <button class="tool"><svg width="30" height="28" viewBox="0 0 30 28" stroke="#aaa" stroke-width="2"><path d="M0 2h30M10 10h20M0 18h30M10 26h20"/></svg></button>
          <button class="tool"><svg width="30" height="28" viewBox="0 0 30 28" stroke="#aaa" stroke-width="2"><path d="M0 2h30M0 10h30M0 18h30M0 26h30"/></svg></button>
          <button class="tool"><svg width="32" height="32" viewBox="0 0 32 32" fill="none" stroke="#aaa" stroke-width="2"><path d="M5 14h22M5 21h22M5 28h22"/><path d="M1 0v32M31 0v32M5 5h22M9 1 5 5l4 4M23 1l4 4-4 4" stroke="#9cc3e6"/></svg></button>
          <i class="sep"></i>
          <button class="split"><span><svg width="30" height="32" viewBox="0 0 30 32" fill="none" stroke="#aaa" stroke-width="2"><path d="M6 0v30M1 25l5 6 5-6M20 17v13M15 25l5 6 5-6"/><path d="M13 3h7q0 7-8 11M25 0v14M25 7h4" stroke="#9cc3e6"/></svg></span><svg width="12" height="10"><use href="#chev"/></svg></button>
          <button class="split"><span><svg width="34" height="32" viewBox="0 0 34 32" fill="none" stroke="#aaa" stroke-width="2"><path d="M10 5H2v22h8M24 5h8v22h-8M9 16h16"/><path d="M17 12V1l-4 4M17 1l4 4M17 20v11l-4-4M17 31l4-4" stroke="#9cc3e6"/></svg></span><svg width="12" height="10"><use href="#chev"/></svg></button>
        </div>
      </div>
      <button class="big off"><span class="icon"><svg width="60" height="60" viewBox="0 0 60 60"><path d="M1 7h38l14 18-8 18H2l16-18z" fill="#cfe6cf" stroke="#a9d3ae" stroke-width="2"/><path d="M24 27h34v24H24z" fill="#fafafa" stroke="#aaa" stroke-width="2"/><path d="M29 34h3M35 34h18M29 40h3M35 40h18M29 46h3M35 46h18" stroke="#bbb" stroke-width="2"/></svg><svg width="12" height="10"><use href="#chev"/></svg></span>SmartArt<br>로 변환</button>
    </div>

    <div class="group insert-group">
      <button class="big"><span class="icon"><svg width="60" height="60" viewBox="0 0 60 60"><path d="M2 7h55v40H2z" fill="#fafafa" stroke="#333" stroke-width="3"/><path d="m3 38 15-20 15 18 8-8 15 17H3z" fill="#8fbce8" stroke="#2767b0" stroke-width="2"/><circle cx="45" cy="18" r="4" fill="#eb9540"/></svg><svg width="12" height="10"><use href="#chev"/></svg></span>그림</button>
      <button class="big"><span class="icon"><svg width="60" height="60" viewBox="0 0 60 60"><path d="M2 1h36v36H2z" fill="#8fbce8" stroke="#2767b0" stroke-width="2"/><circle cx="37" cy="36" r="21" fill="#f4f4f4"/><circle cx="37" cy="36" r="19" fill="#fafafa" stroke="#333" stroke-width="2"/></svg><svg width="12" height="10"><use href="#chev"/></svg></span>도형</button>
      <button class="big"><span class="icon"><svg width="64" height="60" viewBox="0 0 64 60"><path d="M4 5h56v46H4z" fill="#fafafa" stroke="#333" stroke-width="3"/><path d="M1 1h7v7H1zM56 1h7v7h-7zM1 48h7v7H1zM56 48h7v7h-7z" fill="#3f8fd2"/><text x="32" y="40" class="box-ga">가</text></svg><svg width="12" height="10"><use href="#chev"/></svg></span>텍스트<br>상자</button>
    </div>

    <div class="group last">
      <button class="big"><span class="icon"><svg width="60" height="60" viewBox="0 0 60 60"><path d="M12 9h36v38H12z" fill="#f7dd9a" stroke="#e0903f" stroke-width="2"/><path d="M2 1h23v23H2zM35 34h23v23H35z" fill="#fafafa" stroke="#333" stroke-width="3"/></svg><svg width="12" height="10"><use href="#chev"/></svg></span>정렬</button>
      <button class="big off"><span class="icon"><svg width="60" height="60" viewBox="0 0 60 60" fill="#f4f4f4" stroke="#b5b5b5" stroke-width="2"><path d="M3 1h50q3 0 3 3v48q0 3-3 3H3q-3 0-3-3V4q0-3 3-3z"/><path d="M58 19q4 2 0 8L38 50l-6-5z"/><path d="M15 56q3 0 4-7 3-7 11-4 8 4 3 11-9 8-18 0z" fill="#cadff4" stroke="#9cc3e6"/></svg><svg width="12" height="10"><use href="#chev"/></svg></span>빠른<br>스타일</button>
      <div class="stack wide-rows off">
        <button class="line"><svg width="30" height="32" viewBox="0 0 30 32" fill="none" stroke="#aaa" stroke-width="2"><path d="M4 17 15 6l11 9-12 12zM12 9V2h6v6"/><path d="M26 15v9" stroke="#9cc3e6" stroke-width="3"/></svg>도형 채우기<svg width="12" height="10"><use href="#chev"/></svg></button>
        <button class="line"><svg width="30" height="28" viewBox="0 0 30 28" fill="none" stroke="#aaa" stroke-width="2"><path d="M18 5H2v18h6"/><path d="m12 24 3-8L25 3l5 4-11 13z" stroke="#9cc3e6"/></svg>도형 윤곽선<svg width="12" height="10"><use href="#chev"/></svg></button>
      </div>
    </div>
  </section>

  <div class="workspace">
    <aside class="slides">
      <ol>
        <li><span>1</span><a href="#" class="thumb"><svg viewBox="0 0 2134 1200"><use href="#slide-1"/></svg></a></li>
        <li><span>2</span><a href="#" class="thumb"><svg viewBox="0 0 2134 1200"><use href="#slide-2"/>
<foreignObject x="1684" y="66" width="440" height="1120"><pre><b>▶ 가로 길이 : 최대 1280pixel

▶ 세로 길이 : 제한 없음</b>

[1] 배너
-  로그인 전/후 다른 배너 매체
-  관리자에서 배너 등록 가능

[2] 마케팅 메시지
-  로그인 전/후 다른 메시지 매체

[3] 보조 메뉴 영역
-  로그인 전/후 다른 서브 메뉴 구성
-  회원가입 : 회원가입으로 이동(self)
-  로그인 : 로그인 화면으로 이동(self)
-  ID/비밀번호 찾기 : [고객센터 &gt; ID 찾
   기]로 이동(self)
-  장바구니 : [마이 페이지 &gt; 장바구니]
   로 이동(self)
-  주문내역 : [마이 페이지 &gt; 주문 배송
   조회]로 이동(self)
-  1:1 문의 : [마이 페이지 &gt; 1:1 문의]로
   이동(self)
-  마이 페이지 : [마이 페이지 &gt; 주문 배
   송 조회]로 이동(self)
-  로그아웃 : 클릭 시 로그아웃

[4] 검색 바 영역
-  <b>선택옵션</b>
-  전체 검색, 스타일 숍 상품, 오픈 숍 상
   품, 공지사항 게시판 제목 / 내용, 커뮤
   니티, 게시판 제목 / 내용, 상품문의 내
   용 검색
-  기본 문구 : 검색어를 입력하세요!

[5] 메인 메뉴 영역
-  로그인 전과 후의 변화 없음
-  (자세한 내용은 GNB 페이지 참고)</pre></foreignObject></svg></a></li>
        <li><span>3</span><a href="#" class="thumb selected"><svg viewBox="0 0 2134 1200"><use href="#slide-3"/>
<foreignObject x="1684" y="66" width="440" height="1120"><pre class="tight">[1] 오픈 드롭 다운 메뉴
-  오픈 숍 메뉴 위에 마우스를 올리면 서브
   메뉴 열림
-  관리자 지정 카테고리 최대 5개 노출
-  카테고리 별 최근 등록 상품 4개 노출
-  기본값 : 첫 번째 카테고리의 최근 등록된
   상품

[2] 최근 등록된 상품
-  표기 항목 스케치 참조
-  상품명이 00자 이상인 경우 00자 이후에는
   밑줄임표(…) 사용
-  이미지, 상품명 클릭 시 상세페이지로 이동
   (self)
-  호출 상품이 없을 시 “등록된 상품이 없습
   니다.”

[3] 스타일 숍 드롭 다운 메뉴
-  스타일 숍 메뉴 위에 마우스를 올리면 서브
   메뉴 열림
-  관리자 지정 카테고리 최대 5개 노출
-  카테고리 별 최근 등록 상품 4개 노출
-  기본값 : 첫 번째 카테고리의 최근 등록된
   상품

[4] 최근 등록된 상품
-  표기 항목 스케치 참조
-  상품명이 00자 이상인 경우 00자 이후에는
   밑줄임표(…) 사용
-  이미지, 상품명 클릭 시 상세페이지로 이동
   (self)
-  호출 상품이 없을 시 “등록된 상품이 없습
   니다.”

[5,8] 라라마켓 소개, 고객센터 드롭 다운 메뉴
-  마우스 커서가 라라마켓 소개 메뉴 위에 놓
   이면 서브메뉴 열림
-  서브메뉴를 클릭 시 해당 페이지로 이동
   (self)

[6,7] 상품평, 이벤트
-  서브메뉴 없음
-  클릭 시 해당 페이지로 이동(self)</pre></foreignObject></svg></a></li>
        <li><span>4</span><a href="#" class="thumb"><svg viewBox="0 0 2134 1200"><use href="#slide-4"/>
<foreignObject x="1684" y="66" width="440" height="1120"><pre class="tight">[1~4] 배너 링크 (blank)
-  <u>www.gmarket.co.kr/lalala</u>
-  <u>www.11st.co.kr/lala</u>
-  <u>www.auction.co.kr/lala</u>
-  등 입점한 사이트 링크 주소

[5] 라라마켓 블로그 (blank)
-  Blog.naver.com/lalala

[6] 라라마켓 블로그(self)
-  회사 소개 페이지로 이동

[7] 이용약관(self)
-  이용약관 페이지로 이동

[8] 개인정보처리방침(self)
-  개인정보처리방침 페이지로 이동

[9] 고객센터(self)
-  [고객센터 &gt; 공지사항] 페이지로 이동

[10] 판매자 등록(팝업)
-  클릭(로그인 전) : Alert 10 – 1
-  클릭(로그인 후) : 판매자 등록 본인 인증
   화면으로 이동(회원가입 프로세스 참조)

[11] 사업자 번호 확인 (blank)
-  아래 링크에서 팝업 링크
-  <u>www.ftc.go.kr</u> /info/bizinfo

[12] 소셜링크 (blank)
-  <u>www.X</u> 주소
-  www. 인스타 주소
-  등등 주소</pre></foreignObject></svg></a></li>
        <li><span>5</span><a href="#" class="thumb"><svg viewBox="0 0 2134 1200"><use href="#slide-5"/></svg></a></li>
      </ol>
      <i class="scrollbar"></i>
    </aside>

    <section class="stage">
      <article class="slide">
        <div class="slide-main">
          <h1>GNB <span class="typo">서브메뉴</span></h1>
          <div class="wireframe">
            <div class="block">
              <ul class="gnb">
                <li class="on">오픈 숍<svg width="20" height="12" viewBox="0 0 20 12"><path d="M1 11 10 1l9 10z" fill="#fff" stroke="#aaa"/></svg><b class="badge at-open">1</b></li>
                <li>스타일 숍<svg width="20" height="10"><use href="#nav-chev"/></svg></li>
                <li><span class="typo">라라마켓</span><svg width="20" height="10"><use href="#nav-chev"/></svg></li>
                <li><span class="typo">상품평</span></li>
                <li>이벤트</li>
                <li>고객센터<svg width="20" height="10"><use href="#nav-chev"/></svg></li>
              </ul>
              <div class="mega">
                <ul class="cats"><li class="hot">Outer</li><li>Top</li><li>Bottom</li><li>Skirt</li><li>Dress</li></ul>
                <div class="recent">
                  <h2>최근 등록된 상품</h2>
                  <div class="goods">
                    <figure><div class="ph"><svg viewBox="0 0 240 155" preserveAspectRatio="none"><path d="m0 0 240 155M240 0 0 155"/></svg><span>Image</span></div><figcaption>[상품명]<br>[가격]원</figcaption></figure>
                    <figure><div class="ph"><svg viewBox="0 0 240 155" preserveAspectRatio="none"><path d="m0 0 240 155M240 0 0 155"/></svg><span>Image</span></div><figcaption>[상품명]<br>[가격]원</figcaption></figure>
                    <figure><div class="ph"><svg viewBox="0 0 240 155" preserveAspectRatio="none"><path d="m0 0 240 155M240 0 0 155"/></svg><span>Image</span></div><figcaption>[상품명]<br>[가격]원</figcaption></figure>
                    <figure><div class="ph"><svg viewBox="0 0 240 155" preserveAspectRatio="none"><path d="m0 0 240 155M240 0 0 155"/></svg><span>Image</span></div><figcaption>OO 브랜드 운동복<br>25000원</figcaption></figure>
                  </div>
                </div>
                <b class="badge at-cats">1</b><b class="badge large at-recent">2</b>
              </div>
            </div>

            <div class="block">
              <ul class="gnb">
                <li>오픈 숍<svg width="20" height="10"><use href="#nav-chev"/></svg></li>
                <li class="on">스타일 숍<svg width="20" height="12" viewBox="0 0 20 12"><path d="M1 11 10 1l9 10z" fill="#fff" stroke="#aaa"/></svg><b class="badge at-style">3</b></li>
                <li><span class="typo">라라마켓</span><svg width="20" height="10"><use href="#nav-chev"/></svg></li>
                <li><span class="typo">상품평</span></li>
                <li>이벤트</li>
                <li>고객센터<svg width="20" height="10"><use href="#nav-chev"/></svg></li>
              </ul>
              <div class="mega">
                <ul class="cats"><li>Outer</li><li>Top</li><li>Bottom</li><li class="hot">Skirt</li><li>Dress</li></ul>
                <div class="recent">
                  <h2>최근 등록된 상품</h2>
                  <div class="goods">
                    <figure><div class="ph"><svg viewBox="0 0 240 155" preserveAspectRatio="none"><path d="m0 0 240 155M240 0 0 155"/></svg><span>Image</span></div><figcaption>[상품명]<br>[가격]원</figcaption></figure>
                    <figure><div class="ph"><svg viewBox="0 0 240 155" preserveAspectRatio="none"><path d="m0 0 240 155M240 0 0 155"/></svg><span>Image</span></div><figcaption>[상품명]<br>[가격]원</figcaption></figure>
                    <figure><div class="ph"><svg viewBox="0 0 240 155" preserveAspectRatio="none"><path d="m0 0 240 155M240 0 0 155"/></svg><span>Image</span></div><figcaption>[상품명]<br>[가격]원</figcaption></figure>
                    <figure><div class="ph"><svg viewBox="0 0 240 155" preserveAspectRatio="none"><path d="m0 0 240 155M240 0 0 155"/></svg><span>Image</span></div><figcaption>체크 정장 스커트<br>28000원</figcaption></figure>
                  </div>
                </div>
                <b class="badge large at-recent">4</b>
              </div>
            </div>

            <div class="block">
              <ul class="gnb">
                <li>오픈 숍<svg width="20" height="10"><use href="#nav-chev"/></svg></li>
                <li>스타일 숍<svg width="20" height="10"><use href="#nav-chev"/></svg></li>
                <li class="on"><span class="typo">라라마켓</span><svg width="20" height="12" viewBox="0 0 20 12"><path d="M1 11 10 1l9 10z" fill="#fff" stroke="#aaa"/></svg><b class="badge at-menu">5</b>
                  <div class="drop"><span class="hot"><span class="typo">라라마켓</span> 소개</span><span>대표 인사말</span><span>찾아오시는 길</span></div></li>
                <li><span class="typo">상품평</span><b class="badge at-menu">6</b></li>
                <li>이벤트<b class="badge at-menu">7</b></li>
                <li class="on">고객센터<svg width="20" height="12" viewBox="0 0 20 12"><path d="m1 1 9 10 9-10z" fill="#fff" stroke="#aaa"/></svg><b class="badge at-last">8</b>
                  <div class="drop long"><span class="hot">공지사항</span><span>커뮤니티</span><span>자주 하는 말</span><span>상품문의</span><span>아이디 찾기</span><span>비밀번호 찾기</span></div></li>
              </ul>
            </div>
          </div>
        </div>

        <div class="description">
          <h1>Description</h1>
          <div class="notes">
            <section><h3>[1] 오픈 드롭 다운 메뉴</h3>
              <ul><li>오픈 숍 메뉴 위에 마우스를 올리면 서브<br>메뉴 열림</li><li>관리자 지정 카테고리 최대 5개 노출</li><li>카테고리 별 최근 등록 상품 4개 노출</li><li>기본값 : 첫 번째 카테고리의 최근 등록된<br>상품</li></ul></section>
            <section><h3>[2] 최근 등록된 상품</h3>
              <ul><li>표기 항목 스케치 참조</li><li>상품명이 00자 이상인 경우 00자 이후에는<br><span class="typo">밑줄임표</span>(...) 사용</li><li>이미지, 상품명 클릭 시 상세페이지로 이동<br>(self)</li><li>호출 상품이 없을 시 “등록된 상품이 없습<br>니다.”</li></ul></section>
            <section class="short"><h3>[3] 스타일 숍 드롭 다운 메뉴</h3>
              <ul><li>스타일 숍 메뉴 위에 마우스를 올리면 서브<br>메뉴 열림</li><li>관리자 지정 카테고리 최대 5개 노출</li><li>카테고리 별 최근 등록 상품 4개 노출</li><li>기본값 : 첫 번째 카테고리의 최근 등록된<br>상품</li></ul></section>
            <section><h3>[4] 최근 등록된 상품</h3>
              <ul><li>표기 항목 스케치 참조</li><li>상품명이 00자 이상인 경우 00자 이후에는<br><span class="typo">밑줄임표</span>(...) 사용</li><li>이미지, 상품명 클릭 시 상세페이지로 이동<br>(self)</li><li>호출 상품이 없을 시 “등록된 상품이 없습<br>니다.”</li></ul></section>
            <section><h3>[5,8] <span class="typo">라라마켓</span> 소개, 고객센터 드롭 다운 메뉴</h3>
              <ul><li>마우스 커서가 <span class="typo">라라마켓</span> 소개 메뉴 위에 놓<br>이면 <span class="typo">서브메뉴</span> 열림</li><li>서브메뉴를 클릭 시 해당 페이지로 이동<br>(self)</li></ul></section>
            <section><h3>[6,7] <span class="typo">상품평,</span> 이벤트</h3>
              <ul><li><span class="typo">서브메뉴</span> 없음</li><li>클릭 시 해당 페이지로 이동(self)</li></ul></section>
          </div>
        </div>
      </article>
    </section>
  </div>

  <footer class="statusbar">
    <div class="status-left">
      <span>슬라이드 3/7</span><span>한국어</span>
      <span class="access"><svg width="30" height="32" viewBox="0 0 30 32" fill="none" stroke="#555" stroke-width="2"><circle cx="14" cy="5" r="4"/><path d="M2 8q2-4 5 0 7 4 14 0 4-3 5 1-2 3-8 5v6M10 14v8l-5 8M2 8q1 4 8 6M15 18l12 12M27 18 15 30"/></svg>접근성: 조사 필요</span>
    </div>
    <div class="status-right">
      <button class="memo"><svg width="28" height="26" viewBox="0 0 28 26"><path d="m14 0 7 8H7zM0 11h28v3H0zM0 17h28v3H0zM0 23h15v3H0z" fill="#555"/></svg>메모</button>
      <button class="memo"><svg width="28" height="26" viewBox="0 0 28 26"><path d="M2 0h24q2 0 2 2v14q0 2-2 2H14l-6 8v-8H2q-2 0-2-2V2q0-2 2-2z" fill="#555"/></svg>메모</button>
      <button class="view active"><svg width="30" height="28" viewBox="0 0 30 28"><rect width="30" height="28" rx="2" fill="#f4f4f4"/><path d="M4 5h3v18H4zM10 5h16v12H10zM10 20h16v3H10z" fill="#8a8a8a"/><path d="M14 8h8v6h-8z" fill="#f4f4f4"/></svg></button>
      <button class="view"><svg width="30" height="24" viewBox="0 0 30 24" fill="#555"><rect width="12" height="9" rx="1"/><rect x="18" width="12" height="9" rx="1"/><rect y="14" width="12" height="9" rx="1"/><rect x="18" y="14" width="12" height="9" rx="1"/></svg></button>
      <button class="view"><svg width="32" height="28" viewBox="0 0 32 28" fill="none" stroke="#555" stroke-width="2"><path d="M1 3q9-4 15 1 6-5 15-1v22q-9-3-15 1-6-4-15-1zM16 4v22M4 9h8M4 14h8M4 19h8M20 9h8M20 14h8M20 19h8"/></svg></button>
      <button class="view"><svg width="30" height="26" viewBox="0 0 30 26" fill="none" stroke="#555" stroke-width="2"><path d="M0 2h30" stroke-width="4"/><path d="M3 3v14h24V3M15 17v7M9 24h12M9 10h12"/></svg></button>
      <span class="zoom-out"></span>
      <input type="range" min="0" max="100" value="52" aria-label="확대/축소">
      <span class="zoom-in"></span>
      <span class="percent">112%</span>
      <svg width="28" height="28" viewBox="0 0 28 28" fill="none" stroke="#555" stroke-width="3"><path d="M2 2h24v22H2zM14 8v14M9 18l5 5 5-5M6 16h4M22 16h-4"/></svg>
    </div>
  </footer>

  <div class="shot">
    <svg viewBox="0 0 2880 1800" preserveAspectRatio="none">
      <rect width="2880" height="1800" fill="#ececec"/>
      <rect width="2880" height="50" fill="#e9bfe0"/>
      <text x="107" y="34" class="shot-text strong">PowerPoint</text><text x="295" y="34" class="shot-text">파일　편집　보기　삽입　서식　정렬　도구　슬라이드 쇼　창　도움말</text><text x="2587" y="34" class="shot-text">5월 7일 (화) 오후 5:24</text>
      <rect y="50" width="2880" height="64" fill="#b7472a"/>
      <circle cx="38" cy="81" r="13" fill="#ee6a5f"/><circle cx="78" cy="81" r="13" fill="#f5bd4f"/><circle cx="118" cy="81" r="13" fill="#62c454"/>
      <text x="1358" y="90" class="shot-text" fill="#fff">라라마켓스토리보드</text>
      <rect y="114" width="2880" height="210" fill="#f4f4f4"/>
      <text x="22" y="151" class="shot-text">홈　삽입　그리기　디자인　전환　애니메이션　슬라이드 쇼　검토　보기　녹화　입력하세요</text>
      <rect x="611" y="192" width="342" height="48" fill="#fff"/><rect x="958" y="192" width="108" height="48" fill="#fff"/>
      <path d="M34 192h50v60H34zM320 192h59v50h-59z" fill="#fafafa" stroke="#555" stroke-width="4"/><path d="M1940 198h57v42h-57zM2041 192h55v50h-55z" fill="#8fbce8"/><path d="M2137 192h64v55h-64z" fill="#fff" stroke="#3f8fd2" stroke-width="5"/><path d="M2278 192h57v55h-57z" fill="#f7dd9a"/>
      <rect y="324" width="528" height="1310" fill="#e5e1e7"/>
      <svg x="63" y="341" width="396" height="222" viewBox="0 0 2134 1200"><use href="#slide-1"/></svg>
      <svg x="63" y="601" width="396" height="222" viewBox="0 0 2134 1200"><use href="#slide-2"/></svg>
      <rect x="58" y="596" width="406" height="232" rx="10" fill="none" stroke="#b7472a" stroke-width="8"/>
      <svg x="63" y="861" width="396" height="222" viewBox="0 0 2134 1200"><use href="#slide-3"/></svg>
      <svg x="63" y="1121" width="396" height="222" viewBox="0 0 2134 1200"><use href="#slide-4"/></svg>
      <svg x="63" y="1381" width="396" height="222" viewBox="0 0 2134 1200"><use href="#slide-5"/></svg>
      <rect x="506" y="331" width="16" height="930" rx="8" fill="#b0aeb2"/>
      <use href="#slide-2" x="642" y="374"/>
      <foreignObject x="2328" y="440" width="440" height="1100"><pre><b>▶ 가로 길이 : 최대 1280pixel

▶ 세로 길이 : 제한 없음</b>

[1] 배너
-  로그인 전/후 다른 배너 매체
-  관리자에서 배너 등록 가능

[2] 마케팅 메시지
-  로그인 전/후 다른 메시지 매체

[3] 보조 메뉴 영역
-  로그인 전/후 다른 서브 메뉴 구성
-  회원가입 : 회원가입으로 이동(self)
-  로그인 : 로그인 화면으로 이동(self)
-  ID/비밀번호 찾기 : [고객센터 &gt; ID 찾
   기]로 이동(self)
-  장바구니 : [마이 페이지 &gt; 장바구니]
   로 이동(self)

[4] 검색 바 영역
-  기본 문구 : 검색어를 입력하세요!</pre></foreignObject>
      <rect y="1634" width="2880" height="46" fill="#ccc"/>
      <rect y="1680" width="1847" height="120" fill="#1c1c1e"/><rect x="1847" y="1680" width="1033" height="120" fill="#4310c4"/>
      <rect x="74" y="1684" width="1773" height="106" rx="20" fill="#6d676d"/><rect x="1800" y="1684" width="1008" height="106" rx="20" fill="#9a58f4"/>
      <g>
        <use href="#app-finder" x="88" y="1698" width="70" height="70"/><use href="#app-launchpad" x="177" y="1698" width="70" height="70"/><use href="#app-safari" x="267" y="1698" width="70" height="70"/><use href="#app-chrome" x="356" y="1698" width="70" height="70"/><use href="#app-messages" x="446" y="1698" width="70" height="70"/><use href="#app-mail" x="535" y="1698" width="70" height="70"/><use href="#app-maps" x="625" y="1698" width="70" height="70"/><use href="#app-photos" x="714" y="1698" width="70" height="70"/><use href="#app-facetime" x="804" y="1698" width="70" height="70"/><use href="#app-calendar" x="893" y="1698" width="70" height="70"/><use href="#app-contacts" x="983" y="1698" width="70" height="70"/><use href="#app-reminders" x="1072" y="1698" width="70" height="70"/><use href="#app-notes" x="1162" y="1698" width="70" height="70"/><use href="#app-tv" x="1251" y="1698" width="70" height="70"/><use href="#app-music" x="1341" y="1698" width="70" height="70"/><use href="#app-talk" x="1430" y="1698" width="70" height="70"/><use href="#app-podcasts" x="1520" y="1698" width="70" height="70"/><use href="#app-keynote" x="1609" y="1698" width="70" height="70"/><use href="#app-numbers" x="1699" y="1698" width="70" height="70"/><use href="#app-pages" x="1788" y="1698" width="70" height="70"/><use href="#app-appstore" x="1878" y="1698" width="70" height="70"/><use href="#app-vscode" x="1967" y="1698" width="70" height="70"/><use href="#app-eclipse" x="2057" y="1698" width="70" height="70"/><use href="#app-settings" x="2146" y="1698" width="70" height="70"/><use href="#app-zoom" x="2236" y="1698" width="70" height="70"/><use href="#app-notion" x="2325" y="1698" width="70" height="70"/><use href="#app-ppt" x="2415" y="1698" width="70" height="70"/><use href="#app-slack" x="2504" y="1698" width="70" height="70"/><use href="#app-updater" x="2594" y="1698" width="70" height="70"/><use href="#app-trash" x="2724" y="1690" width="70" height="82"/>
      </g>
    </svg>
  </div>
</main>

<footer class="dock">
  <div class="apps">
    <a href="#" class="app running"><svg><use href="#app-finder"/></svg></a>
    <a href="#" class="app"><svg><use href="#app-launchpad"/></svg></a>
    <a href="#" class="app"><svg><use href="#app-safari"/></svg></a>
    <a href="#" class="app running"><svg><use href="#app-chrome"/></svg></a>
    <a href="#" class="app"><svg><use href="#app-messages"/></svg></a>
    <a href="#" class="app"><svg><use href="#app-mail"/></svg></a>
    <a href="#" class="app"><svg><use href="#app-maps"/></svg></a>
    <a href="#" class="app"><svg><use href="#app-photos"/></svg></a>
    <a href="#" class="app"><svg><use href="#app-facetime"/></svg></a>
    <a href="#" class="app"><svg><use href="#app-calendar"/></svg></a>
    <a href="#" class="app"><svg><use href="#app-contacts"/></svg></a>
    <a href="#" class="app"><svg><use href="#app-reminders"/></svg></a>
    <a href="#" class="app running"><svg><use href="#app-notes"/></svg></a>
    <a href="#" class="app"><svg><use href="#app-tv"/></svg></a>
    <a href="#" class="app"><svg><use href="#app-music"/></svg></a>
    <a href="#" class="app running"><svg><use href="#app-talk"/></svg></a>
    <a href="#" class="app"><svg><use href="#app-podcasts"/></svg></a>
    <a href="#" class="app"><svg><use href="#app-keynote"/></svg></a>
    <a href="#" class="app"><svg><use href="#app-numbers"/></svg></a>
    <a href="#" class="app"><svg><use href="#app-pages"/></svg></a>
    <a href="#" class="app"><svg><use href="#app-appstore"/></svg></a>
    <a href="#" class="app running"><svg><use href="#app-vscode"/></svg></a>
    <a href="#" class="app"><svg><use href="#app-eclipse"/></svg></a>
    <a href="#" class="app"><svg><use href="#app-settings"/></svg><b class="count">1</b></a>
    <a href="#" class="app"><svg><use href="#app-zoom"/></svg></a>
    <a href="#" class="app running"><svg><use href="#app-notion"/></svg></a>
    <a href="#" class="app running"><svg><use href="#app-ppt"/></svg></a>
    <a href="#" class="app running"><svg><use href="#app-slack"/></svg></a>
    <a href="#" class="app running"><svg><use href="#app-updater"/></svg><b class="count">3</b></a>
  </div>
  <i class="dock-line"></i>
  <a href="#" class="trash"><svg width="68" height="82"><use href="#app-trash"/></svg></a>
</footer>

</body>
</html>
```
FILE: styles.css
```css
* {
  box-sizing: border-box;
}
body {
  margin: 0;
  min-height: 100vh;
  display: flex;
  flex-direction: column;
  font-family: Inter, "Noto Sans CJK KR", sans-serif;
  font-size: 24px;
  color: #222;
  background: linear-gradient(90deg, #1b1b1d 64.1%, #4a10b4 64.1%, #6a16c4 72%, #5011bc 80%, #3f0cc8);
}
a {
  color: inherit;
  text-decoration: none;
}
button {
  border: none;
  background: none;
  padding: 0;
  margin: 0;
  font: inherit;
  color: inherit;
}
ul, ol, h1, h2, h3, figure, pre {
  margin: 0;
  padding: 0;
  list-style: none;
  font-weight: 400;
}
svg {
  display: block;
  flex: none;
  overflow: visible;
}
symbol {
  overflow: visible;
}
.sprite {
  position: absolute;
}

/* menu bar */
.menubar {
  display: flex;
  align-items: center;
  height: 50px;
  padding: 0 38px 6px 40px;
  color: #231a24;
  background: linear-gradient(90deg, #eaacd9, #e5cfe8 42%, #e8d3e9 65%, #ecc3e0);
  border-bottom: 2px solid #7d5a80;
  white-space: nowrap;
}
.menus {
  display: flex;
  align-items: baseline;
  gap: 42px;
  margin-left: 41px;
  flex: 1;
}
.menus strong, .clock {
  font-size: 26px;
}
.status-icons {
  display: flex;
  align-items: center;
  gap: 35px;
  margin-right: 31px;
}
.tiny-n {
  font: 700 14px Inter, sans-serif;
  fill: #fff;
  text-anchor: middle;
}
.serif-n {
  font: 700 23px "Liberation Serif", serif;
  fill: currentColor;
  text-anchor: middle;
}
.han {
  font-size: 22px;
  fill: #ecd5e8;
  text-anchor: middle;
}

/* window */
.window {
  position: relative;
  flex: 1;
  display: flex;
  flex-direction: column;
  margin-bottom: 120px;
  border-radius: 20px;
  background: #ececec;
}
.titlebar {
  position: relative;
  display: flex;
  align-items: center;
  height: 64px;
  padding: 0 22px 0 25px;
  background: #b4472a;
  border-top: 2px solid #cf8672;
  border-radius: 20px 20px 0 0;
  color: #fff;
}
.lights {
  display: flex;
  gap: 14px;
}
.lights i {
  width: 26px;
  height: 26px;
  border-radius: 50%;
  border: 2px solid rgba(0, 0, 0, 0.15);
}
.close { background: #ee6a5f; }
.mini { background: #f5bd4f; }
.full { background: #62c454; }
.quick, .title-right {
  display: flex;
  align-items: center;
  fill: none;
  stroke: #fff;
  stroke-width: 2px;
}
.quick {
  gap: 22px;
  margin-left: 58px;
}
.dim {
  opacity: 0.45;
  color: #fff;
}
.small {
  margin: 0 -4px 0 -8px;
}
.doc-title {
  display: flex;
  justify-content: center;
  gap: 10px;
  flex: 1;
  margin-right: 452px;
  font-weight: 700;
  color: #f8dcd4;
  align-items: center;
}
.doc-title svg, .quick text {
  stroke: none;
}
.doc-p {
  font: 700 12px Inter, sans-serif;
  fill: #fff;
  text-anchor: middle;
}
.title-right {
  gap: 34px;
}
.tabs {
  display: flex;
  align-items: center;
  gap: 46px;
  height: 62px;
  padding: 0 20px 2px 22px;
  background: #f6f6f6;
  white-space: nowrap;
}
.tab {
  padding: 2px 0 8px;
}
.current {
  font-weight: 700;
  background: linear-gradient(#b4472a, #b4472a) bottom / 100% 6px no-repeat;
}
.tell {
  display: flex;
  align-items: center;
  gap: 18px;
  margin-left: -10px;
}
.share {
  display: flex;
  align-items: center;
  gap: 10px;
  height: 48px;
  margin-left: auto;
  padding: 0 11px 0 13px;
  border: 2px solid #d8d8d8;
  border-radius: 8px;
  background: #fff;
  color: #b4472a;
  font-size: 22px;
  font-weight: 700;
}

/* ribbon */
.ribbon {
  display: flex;
  padding: 6px 0 16px;
  background: linear-gradient(#f5f5f5, #efefef);
  border-bottom: 2px solid #c9c9c9;
  font-size: 20px;
  line-height: 24px;
  color: #000;
  white-space: nowrap;
}
.group {
  display: flex;
  gap: 15px;
  height: 124px;
  padding: 0 26px;
  border-right: 2px solid #d2d2d2;
}
.clipboard {
  gap: 12px;
  padding-left: 28px;
}
.font-group {
  padding: 0 5px 0 21px;
}
.para-group {
  gap: 3px;
  padding: 0 27px 0 22px;
}
.last {
  gap: 17px;
  border: none;
}
.insert-group {
  padding: 0 27px;
}
.big {
  display: flex;
  flex-direction: column;
  align-items: center;
  width: 84px;
  padding-top: 10px;
}
.icon {
  display: flex;
  align-items: center;
  gap: 12px;
  height: 60px;
  margin-bottom: 8px;
}
.off {
  color: #8c8c8c;
}
.stack {
  display: flex;
  flex-direction: column;
  justify-content: space-between;
}
.line {
  display: flex;
  align-items: center;
  gap: 12px;
  height: 36px;
}
.stack .line:nth-child(1) { margin-top: 4px; }
.stack .line:last-child { margin-bottom: -4px; }
.wide-rows {
  justify-content: flex-start;
  gap: 28px;
}
.stack.wide-rows .line:nth-child(1) { margin-top: 16px; }
.rows {
  display: flex;
  flex-direction: column;
  gap: 16px;
  padding-top: 10px;
}
.row {
  display: flex;
  align-items: center;
  height: 48px;
}
.pick {
  position: relative;
  width: 108px;
  margin-right: 9px;
  color: #555;
}
.pick.wide {
  width: 342px;
  margin-right: 5px;
}
.pick select {
  appearance: none;
  width: 100%;
  height: 48px;
  border: 2px solid #dadada;
  border-radius: 8px;
  background: #fff;
}
.pick svg {
  position: absolute;
  right: 8px;
  top: 19px;
}
.tool {
  display: flex;
  align-items: center;
  justify-content: center;
  width: 40px;
  height: 40px;
  margin-right: 13px;
  font-size: 22px;
}
.tool.off {
  color: #aaa;
}
.row.off {
  color: #a2a2a2;
}
.grow svg, .shrink svg {
  margin-bottom: 20px;
}
.grow {
  font-size: 24px;
}
.strike {
  font-size: 18px;
}
.latin {
  font-size: 26px;
}
.latin sup, .latin sub {
  font-size: 14px;
  line-height: 14px;
  color: #9cc3e6;
}
.latin sup {
  align-self: flex-start;
}
.latin sub {
  align-self: flex-end;
}
.split {
  display: flex;
  align-items: center;
  gap: 10px;
  margin-right: 15px;
}
.split span {
  display: flex;
  flex-direction: column;
  align-items: center;
  width: 40px;
}
.split .pair {
  font-size: 18px;
}
.sep {
  width: 1px;
  height: 36px;
  margin: 0 20px 0 7px;
  background: #cfcfcf;
}
.num {
  font: 12px Inter, sans-serif;
  fill: #9cc3e6;
}
.box-ga {
  font-size: 34px;
  fill: #3f8fd2;
  text-anchor: middle;
}

/* slide list */
.workspace {
  flex: 1;
  display: flex;
  border-bottom: 2px solid #9c9c9c;
}
.slides {
  display: flex;
  justify-content: space-between;
  width: 537px;
  padding: 7px 6px 0 20px;
  background: #e5e1e7;
  border-right: 2px solid #c8c8c8;
  box-shadow: inset -7px 0 #f5f5f5;
}
.slides ol {
  display: flex;
  flex-direction: column;
  gap: 36px;
  padding-top: 9px;
}
.slides li {
  display: flex;
  font-size: 26px;
  color: #4a484b;
}
.slides li span {
  width: 42px;
  padding-top: 1px;
}
.thumb {
  width: 398px;
  height: 224px;
  border: 2px solid #cbc9cc;
  border-radius: 10px;
  overflow: hidden;
  background: #fff;
}
.thumb.selected {
  outline: 6px solid #b04e33;
}
.thumb svg {
  width: 100%;
  height: 100%;
  overflow: hidden;
}
.scrollbar {
  width: 16px;
  height: 930px;
  margin-right: 7px;
  border-radius: 8px;
  background: #b0aeb2;
}
.wire {
  fill: none;
  stroke: #7f7f7f;
  stroke-width: 5px;
}
.wire text, .ink text {
  stroke: none;
  font-size: 25px;
  font-weight: 500;
  fill: #111;
}
.big-ink text {
  font-size: 31px;
}
.wire .soft, .ink .soft {
  font-size: 20px;
  fill: #7f7f7f;
}
.ink .strong {
  font-size: 34px;
  font-weight: 700;
}
.ink .hot {
  fill: #e8392b;
}
.mid, .cover-text, .dot-text {
  text-anchor: middle;
}
.head-text {
  font-size: 32px;
  fill: #fff;
}
.cover-text {
  font-size: 116px;
  fill: #fff;
}
.dots {
  fill: #6897cf;
}
.dot-text {
  font-size: 36px;
  font-weight: 600;
  fill: #fff;
}
.tiny {
  font-size: 16px;
}
.thumb pre, .shot pre {
  font: 500 21px/27px "Noto Sans CJK KR", sans-serif;
  color: #111;
}
.thumb .tight {
  line-height: 24px;
}
.thumb pre u {
  color: #1f5fc0;
}

/* slide */
.stage {
  flex: 1;
  padding: 50px 104px 50px 105px;
  background: #ebebeb;
  border-bottom: 8px solid #f3f3f3;
  box-shadow: inset 0 -2px #c2c2c2;
}
.slide {
  display: flex;
  aspect-ratio: 16 / 9;
  background: #fff;
  box-shadow: 0 0 0 2px #dadada, 0 6px 40px rgba(0, 0, 0, 0.12);
  font-family: "Open Sans", "Noto Sans CJK KR", sans-serif;
  color: #000;
  white-space: nowrap;
}
.slide-main {
  flex: 1;
}
.slide h1 {
  height: 56px;
  padding-left: 16px;
  line-height: 54px;
  font-size: 26px;
  color: #fff;
  background: #262626;
}
.slide .description h1 {
  padding-left: 14px;
  font-size: 23px;
  background: #808080;
  box-shadow: -2px 0 #fff;
}
.typo {
  text-decoration: underline wavy #e8392b 2px;
  text-underline-offset: 4px;
  text-decoration-skip-ink: none;
}
.wireframe {
  display: flex;
  flex-direction: column;
  gap: 19px;
  margin: 3px 231px 0 198px;
}
.gnb {
  display: grid;
  grid-template-columns: repeat(6, 1fr);
  height: 53px;
  border: 2px solid #7f7f7f;
}
.gnb li {
  position: relative;
  display: flex;
  align-items: center;
  justify-content: space-between;
  padding: 0 18px 2px 14px;
}
.gnb li + li {
  border-left: 2px solid #7f7f7f;
}
.gnb .on {
  background: #d0cece;
}
.mega {
  position: relative;
  display: flex;
  height: 324px;
  border: 2px solid #7f7f7f;
  border-top: none;
}
.cats {
  width: 164px;
  margin: 47px 0 36px;
  padding-left: 38px;
  font-size: 25px;
  line-height: 48px;
  background: repeating-linear-gradient(#8c8c8c 0 6px, transparent 6px 12px) right / 2px 100% no-repeat;
}
.hot {
  color: #e8392b;
}
.recent {
  flex: 1;
  padding: 19px 34px 0 39px;
}
.recent h2 {
  padding-left: 4px;
  font-size: 24px;
  line-height: 34px;
}
.goods {
  display: grid;
  grid-template-columns: repeat(4, 1fr);
  gap: 14px;
  margin-top: 19px;
}
.ph {
  display: flex;
  align-items: center;
  justify-content: center;
  height: 155px;
  padding-top: 4px;
  border: 1px solid #7f7f7f;
  position: relative;
}
.ph svg {
  position: absolute;
  inset: 0;
  width: 100%;
  height: 100%;
  stroke: #7f7f7f;
  stroke-width: 1px;
}
.ph span {
  position: relative;
  padding: 0 4px;
  background: #fff;
  font-size: 19px;
  line-height: 26px;
  color: #7f7f7f;
}
figcaption {
  margin-top: 15px;
  text-align: center;
  line-height: 28px;
}
.badge {
  position: absolute;
  width: 60px;
  height: 52px;
  border-radius: 50%;
  background: #6897cf;
  color: #fff;
  font-size: 38px;
  font-weight: 400;
  line-height: 52px;
  text-align: center;
  z-index: 1;
}
.badge.large {
  width: 64px;
  height: 56px;
  line-height: 56px;
}
.at-open { left: 92px; top: -26px; }
.at-style { left: 114px; top: -26px; }
.at-cats { left: 91px; top: 10px; }
.at-recent { left: 392px; top: 6px; }
.at-menu { left: 115px; top: -16px; }
.at-last { left: 105px; top: -16px; }
.drop {
  position: absolute;
  left: -2px;
  right: 0;
  top: 49px;
  display: flex;
  flex-direction: column;
  padding: 22px 0 24px 21px;
  line-height: 47px;
  background: #fff;
  border: 2px solid #7f7f7f;
}
.drop.long {
  right: -2px;
  padding: 6px 0 13px 14px;
  line-height: 46px;
}
.description {
  width: 461px;
  border-left: 1px solid #7f7f7f;
}
.notes {
  display: flex;
  flex-direction: column;
  gap: 22px;
  padding: 14px 0 0 12px;
  font-size: 22px;
  line-height: 24px;
}
.notes h3 {
  font-size: 22px;
}
.notes .short {
  margin-bottom: -6px;
}
.notes li {
  position: relative;
  padding-left: 29px;
}
.notes li::before {
  content: "-";
  position: absolute;
  left: 0;
}

/* status bar */
.statusbar {
  display: flex;
  justify-content: space-between;
  height: 44px;
  padding: 0 46px 0 48px;
  border-radius: 0 0 20px 20px;
  background: linear-gradient(#dedede, #bdbdbd);
  font-size: 22px;
  color: #4b4b4b;
  white-space: nowrap;
}
.status-left, .status-right {
  display: flex;
  align-items: center;
}
.status-left {
  gap: 40px;
  font-size: 23px;
}
.access {
  display: flex;
  align-items: center;
  gap: 6px;
}
.memo {
  display: flex;
  align-items: center;
  gap: 9px;
  margin-right: 38px;
}
.view {
  display: flex;
  align-items: center;
  justify-content: center;
  width: 72px;
  height: 44px;
}
.memo + .view {
  margin-left: -19px;
}
.active {
  background: #999;
}
.zoom-out, .zoom-in {
  width: 18px;
  height: 18px;
  margin-left: 14px;
  background: linear-gradient(#555, #555) center / 18px 4px no-repeat;
}
.zoom-in {
  background: linear-gradient(#555, #555) center / 18px 4px no-repeat, linear-gradient(#555, #555) center / 4px 18px no-repeat;
}
.statusbar input {
  appearance: none;
  width: 200px;
  height: 8px;
  margin: 0 0 0 14px;
  border-radius: 4px;
  background: #8f8f8f;
}
.statusbar input::-webkit-slider-thumb {
  appearance: none;
  width: 34px;
  height: 34px;
  border-radius: 50%;
  background: #ececec;
  box-shadow: 0 0 3px rgba(0, 0, 0, 0.4);
}
.percent {
  margin: 0 42px 0 36px;
}

/* screenshot preview */
.shot {
  position: absolute;
  right: 24px;
  bottom: 24px;
  width: 304px;
  height: 196px;
  padding: 8px;
  border-radius: 8px;
  background: #fff;
  box-shadow: 0 10px 60px rgba(0, 0, 0, 0.35);
}
.shot svg {
  overflow: hidden;
}
.shot > svg {
  width: 100%;
  height: 100%;
}
.shot-text {
  font-size: 24px;
}

/* dock */
.dock {
  position: fixed;
  left: 74px;
  right: 72px;
  bottom: 10px;
  display: flex;
  height: 108px;
  padding: 14px 12px 0 12px;
  border: 2px solid rgba(255, 255, 255, 0.2);
  border-radius: 30px;
  background: linear-gradient(90deg, #6d676d 62%, #a557f5 70%, #ab58f8 78%, #9a5af6 90%, #8853ec);
  background-clip: padding-box;
}
.apps {
  flex: 1;
  display: flex;
  justify-content: space-between;
}
.app {
  position: relative;
  width: 70px;
}
.app svg {
  width: 70px;
  height: 70px;
}
.running::after {
  content: "";
  position: absolute;
  left: 31px;
  top: 80px;
  width: 8px;
  height: 8px;
  border-radius: 50%;
  background: #000;
}
.count {
  position: absolute;
  right: -8px;
  top: -9px;
  width: 32px;
  height: 32px;
  border-radius: 50%;
  background: #e8493f;
  color: #fff;
  font-size: 20px;
  font-weight: 400;
  line-height: 32px;
  text-align: center;
}
.dock-line {
  width: 2px;
  height: 80px;
  margin: 0 31px 0 27px;
  background: #6a35b8;
}
.trash svg {
  margin-top: -8px;
}
.cal-month, .cal-day, .tv-label, .talk-label, .zoom-label, .notion-label, .p-label {
  text-anchor: middle;
}
.cal-month {
  font: 700 13px "Noto Sans CJK KR", sans-serif;
  fill: #fff;
}
.cal-day {
  font: 300 42px Inter, sans-serif;
  fill: #222;
}
.tv-label {
  font: 500 27px Inter, sans-serif;
  fill: #fff;
}
.talk-label {
  font: 700 18px "Open Sans", sans-serif;
  fill: #fae54a;
}
.zoom-label {
  font: 700 19px Inter, sans-serif;
  fill: #fff;
}
.notion-label {
  font: 700 44px "Liberation Serif", serif;
  fill: #000;
}
.p-label {
  font: 700 20px Inter, sans-serif;
  fill: #fff;
}
```
